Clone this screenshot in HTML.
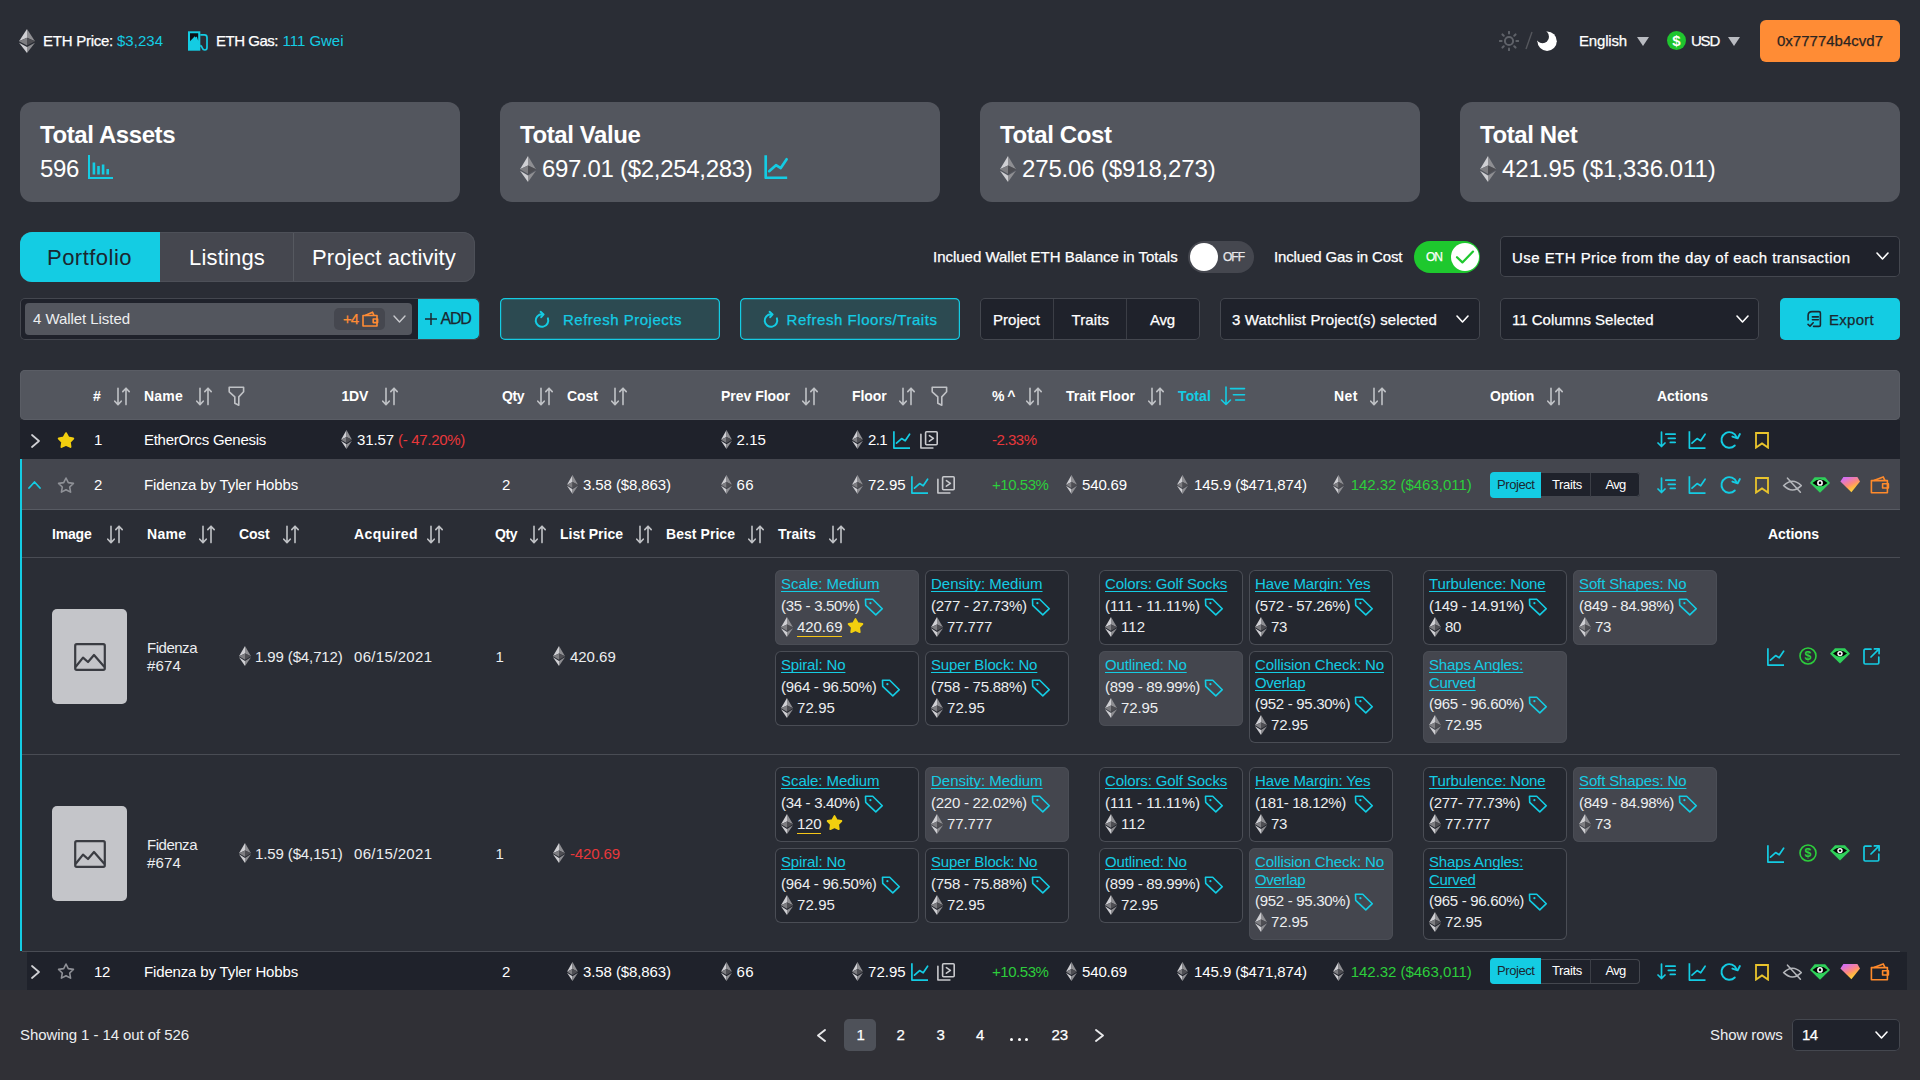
<!DOCTYPE html><html><head><meta charset="utf-8"><title>Portfolio</title><style>*{margin:0;padding:0;box-sizing:border-box}
html,body{width:1920px;height:1080px;overflow:hidden;background:#2a2d35}
body{position:relative;font-family:"Liberation Sans",sans-serif;}
.t{position:absolute;white-space:nowrap}
.r{position:absolute;display:block}
</style></head><body><svg class="r" style="left:19px;top:29px" width="16" height="24" viewBox="0 0 256 417" preserveAspectRatio="none"><polygon points="128,0 0,212 128,154" fill="#cfcfd3"/><polygon points="128,0 256,212 128,154" fill="#8e8e92"/><polygon points="0,212 128,288 128,154" fill="#7d7d81"/><polygon points="256,212 128,288 128,154" fill="#4e4e53"/><polygon points="0,237 128,417 128,312" fill="#cfcfd3"/><polygon points="256,237 128,417 128,312" fill="#8e8e92"/></svg>
<div class="t " style="left:43px;top:31.30px;font-size:15px;line-height:19px;color:#fff;letter-spacing:-0.251px;-webkit-text-stroke:0.25px #fff;">ETH Price:</div>
<div class="t " style="left:117px;top:31.30px;font-size:15px;line-height:19px;color:#14cce3;letter-spacing:0.020px;">$3,234</div>
<svg class="r" style="left:187px;top:31px;" width="22" height="21" viewBox="0 0 22 21"><rect x="1" y="0.3" width="12.3" height="19.4" fill="#14cce3"/><path d="M3 2.2H11.2V9.8L9.8 5.6L8.6 6.6L7.8 5.2L3 10.2Z" fill="#0c1016"/><path d="M13.3 3.9H17.4Q20 3.9 20 6.5V16.6Q20 19 17.8 19Q15.9 19 15.3 17Q14.7 15 13.3 14.4" stroke="#14cce3" stroke-width="1.7" fill="none"/></svg>
<div class="t " style="left:216px;top:31.30px;font-size:15px;line-height:19px;color:#fff;letter-spacing:-0.480px;-webkit-text-stroke:0.25px #fff;">ETH Gas:</div>
<div class="t " style="left:282.5px;top:31.30px;font-size:15px;line-height:19px;color:#14cce3;letter-spacing:-0.018px;">111 Gwei</div>
<svg class="r" style="left:1499px;top:31px;" width="20" height="20" viewBox="0 0 20 20"><g stroke="#5f6269" stroke-width="2" fill="none" stroke-linecap="round"><circle cx="10" cy="10" r="4.1"/><path d="M17.40 10.00L19.30 10.00"/><path d="M15.23 15.23L16.58 16.58"/><path d="M10.00 17.40L10.00 19.30"/><path d="M4.77 15.23L3.42 16.58"/><path d="M2.60 10.00L0.70 10.00"/><path d="M4.77 4.77L3.42 3.42"/><path d="M10.00 2.60L10.00 0.70"/><path d="M15.23 4.77L16.58 3.42"/></g></svg>
<svg class="r" style="left:1524px;top:31px;" width="10" height="19" viewBox="0 0 10 19"><path d="M8 1L2 18" stroke="#55575d" stroke-width="1.4"/></svg>
<svg class="r" style="left:1537px;top:31px;" width="20" height="20" viewBox="0 0 20 20"><defs><mask id="mm"><rect width="20" height="20" fill="#fff"/><circle cx="5.5" cy="5.7" r="6.5" fill="#000"/></mask></defs><circle cx="10.1" cy="10.2" r="9.7" fill="#fff" mask="url(#mm)"/></svg>
<div class="t " style="left:1579px;top:31.30px;font-size:15px;line-height:19px;color:#fff;letter-spacing:-0.171px;-webkit-text-stroke:0.25px #fff;">English</div>
<svg class="r" style="left:1637px;top:37px;" width="12" height="9" viewBox="0 0 12 9"><path d="M0 0H12L6 9Z" fill="#b9bbc1"/></svg>
<svg class="r" style="left:1667px;top:31px;" width="19" height="19" viewBox="0 0 19 19"><circle cx="9.5" cy="9.5" r="9.5" fill="#1fc52e"/><text x="9.5" y="15" font-size="15" font-weight="700" text-anchor="middle" fill="#fff" font-family="Liberation Sans">$</text></svg>
<div class="t " style="left:1691px;top:31.30px;font-size:15px;line-height:19px;color:#fff;letter-spacing:-1.223px;-webkit-text-stroke:0.25px #fff;">USD</div>
<svg class="r" style="left:1728px;top:37px;" width="12" height="9" viewBox="0 0 12 9"><path d="M0 0H12L6 9Z" fill="#b9bbc1"/></svg>
<div class="r" style="left:1760px;top:20px;width:140px;height:42px;background:#ff8c35;border-radius:6px;"></div>
<div class="t " style="left:1777px;top:31.30px;font-size:15px;line-height:19px;color:#2b2421;letter-spacing:0.006px;-webkit-text-stroke:0.25px #2b2421;">0x77774b4cvd7</div>
<div class="r" style="left:20px;top:102px;width:440px;height:100px;background:#53565e;border-radius:12px;"></div>
<div class="t " style="left:40px;top:119.68px;font-size:24px;line-height:30px;color:#fff;font-weight:700;letter-spacing:-0.408px;">Total Assets</div>
<div class="t " style="left:40px;top:153.68px;font-size:24px;line-height:30px;color:#fff;letter-spacing:-0.348px;">596</div>
<svg class="r" style="left:88px;top:155px;" width="26" height="24" viewBox="0 0 26 24"><g fill="none" stroke="#14cce3" stroke-width="2"><path d="M1 0V23H25"/></g><rect x="4.6" y="7.5" width="2.6" height="12" fill="#14cce3"/><rect x="9.2" y="11" width="2.6" height="8.5" fill="#14cce3"/><rect x="13.8" y="9.5" width="2.6" height="10" fill="#14cce3"/><rect x="18.4" y="14" width="2.6" height="5.5" fill="#14cce3"/></svg>
<div class="r" style="left:500px;top:102px;width:440px;height:100px;background:#53565e;border-radius:12px;"></div>
<div class="t " style="left:520px;top:119.68px;font-size:24px;line-height:30px;color:#fff;font-weight:700;letter-spacing:-0.397px;">Total Value</div>
<svg class="r" style="left:520px;top:156px" width="16" height="26" viewBox="0 0 256 417" preserveAspectRatio="none"><polygon points="128,0 0,212 128,154" fill="#cfcfd3"/><polygon points="128,0 256,212 128,154" fill="#8e8e92"/><polygon points="0,212 128,288 128,154" fill="#7d7d81"/><polygon points="256,212 128,288 128,154" fill="#4e4e53"/><polygon points="0,237 128,417 128,312" fill="#cfcfd3"/><polygon points="256,237 128,417 128,312" fill="#8e8e92"/></svg>
<div class="t " style="left:542px;top:153.68px;font-size:24px;line-height:30px;color:#fff;letter-spacing:-0.299px;">697.01 ($2,254,283)</div>
<svg class="r" style="left:764px;top:155px;" width="25" height="24" viewBox="0 0 18 18"><g stroke="#14cce3" stroke-width="2" fill="none" stroke-linecap="butt" stroke-linejoin="round"><path d="M0.9 0.2V17.1H17"/><path d="M3.5 12.1L8.6 7.6L12.2 9.8L16.6 3.2" stroke-linecap="round"/></g></svg>
<div class="r" style="left:980px;top:102px;width:440px;height:100px;background:#53565e;border-radius:12px;"></div>
<div class="t " style="left:1000px;top:119.68px;font-size:24px;line-height:30px;color:#fff;font-weight:700;letter-spacing:-0.404px;">Total Cost</div>
<svg class="r" style="left:1000px;top:156px" width="16" height="26" viewBox="0 0 256 417" preserveAspectRatio="none"><polygon points="128,0 0,212 128,154" fill="#cfcfd3"/><polygon points="128,0 256,212 128,154" fill="#8e8e92"/><polygon points="0,212 128,288 128,154" fill="#7d7d81"/><polygon points="256,212 128,288 128,154" fill="#4e4e53"/><polygon points="0,237 128,417 128,312" fill="#cfcfd3"/><polygon points="256,237 128,417 128,312" fill="#8e8e92"/></svg>
<div class="t " style="left:1022px;top:153.68px;font-size:24px;line-height:30px;color:#fff;letter-spacing:-0.156px;">275.06 ($918,273)</div>
<div class="r" style="left:1460px;top:102px;width:440px;height:100px;background:#53565e;border-radius:12px;"></div>
<div class="t " style="left:1480px;top:119.68px;font-size:24px;line-height:30px;color:#fff;font-weight:700;letter-spacing:-0.392px;">Total Net</div>
<svg class="r" style="left:1480px;top:156px" width="16" height="26" viewBox="0 0 256 417" preserveAspectRatio="none"><polygon points="128,0 0,212 128,154" fill="#cfcfd3"/><polygon points="128,0 256,212 128,154" fill="#8e8e92"/><polygon points="0,212 128,288 128,154" fill="#7d7d81"/><polygon points="256,212 128,288 128,154" fill="#4e4e53"/><polygon points="0,237 128,417 128,312" fill="#cfcfd3"/><polygon points="256,237 128,417 128,312" fill="#8e8e92"/></svg>
<div class="t " style="left:1502px;top:153.68px;font-size:24px;line-height:30px;color:#fff;letter-spacing:-0.034px;">421.95 ($1,336.011)</div>
<div class="r" style="left:20px;top:232px;width:455px;height:50px;background:#45474f;border-radius:12px;box-shadow:inset 0 0 0 1px #4d5058;"></div>
<div class="r" style="left:20px;top:232px;width:140px;height:50px;background:#14cce3;border-radius:0px;border-radius:12px 0 0 12px;"></div>
<div class="r" style="left:293px;top:233px;width:1px;height:48px;background:#565960;border-radius:0px;"></div>
<div class="t " style="left:47px;top:244.38px;font-size:22px;line-height:28px;color:#1b2730;letter-spacing:0.477px;">Portfolio</div>
<div class="t " style="left:189px;top:244.38px;font-size:22px;line-height:28px;color:#fff;letter-spacing:0.176px;">Listings</div>
<div class="t " style="left:312px;top:244.38px;font-size:22px;line-height:28px;color:#fff;letter-spacing:0.136px;">Project activity</div>
<div class="t " style="left:933px;top:247.30px;font-size:15px;line-height:19px;color:#fff;letter-spacing:-0.014px;-webkit-text-stroke:0.25px #fff;">Inclued Wallet ETH Balance in Totals</div>
<div class="r" style="left:1188px;top:241px;width:66px;height:32px;background:#45474f;border-radius:16px;"></div>
<div class="r" style="left:1190px;top:243px;width:28px;height:28px;background:#fff;border-radius:14px;"></div>
<div class="t " style="left:1223px;top:250.34px;font-size:12px;line-height:15px;color:#e8e8ea;letter-spacing:-0.998px;-webkit-text-stroke:0.25px #e8e8ea;">OFF</div>
<div class="t " style="left:1274px;top:247.30px;font-size:15px;line-height:19px;color:#fff;letter-spacing:-0.131px;-webkit-text-stroke:0.25px #fff;">Inclued Gas in Cost</div>
<div class="r" style="left:1414px;top:241px;width:66px;height:32px;background:#1ec82e;border-radius:16px;"></div>
<div class="t " style="left:1426px;top:250.34px;font-size:12px;line-height:15px;color:#fff;letter-spacing:-1.000px;-webkit-text-stroke:0.25px #fff;">ON</div>
<div class="r" style="left:1451px;top:243px;width:28px;height:28px;background:#fff;border-radius:14px;"></div>
<svg class="r" style="left:1455px;top:249px;" width="20" height="16" viewBox="0 0 20 16"><path d="M2 8.2L7.4 13.4L18 2.6" stroke="#1ec82e" stroke-width="2.2" fill="none" stroke-linecap="round" stroke-linejoin="round"/></svg>
<div class="r" style="left:1500px;top:236px;width:400px;height:41px;background:#1f222b;border-radius:5px;box-shadow:inset 0 0 0 1px #44474f;"></div>
<div class="t " style="left:1512px;top:248.30px;font-size:15px;line-height:19px;color:#fff;letter-spacing:0.454px;-webkit-text-stroke:0.25px #fff;">Use ETH Price from the day of each transaction</div>
<svg class="r" style="left:1876px;top:252px;" width="13" height="8" viewBox="0 0 13 8"><path d="M1 1L6.5 7L12 1" stroke="#fff" stroke-width="1.6" fill="none" stroke-linecap="round" stroke-linejoin="round"/></svg>
<div class="r" style="left:20px;top:298px;width:460px;height:42px;background:#1f222b;border-radius:5px;box-shadow:inset 0 0 0 1px #44474f;"></div>
<div class="r" style="left:25px;top:303px;width:387px;height:32px;background:#53565e;border-radius:4px;"></div>
<div class="t " style="left:33px;top:309.30px;font-size:15px;line-height:19px;color:#eceef0;letter-spacing:-0.055px;">4 Wallet Listed</div>
<div class="r" style="left:334px;top:308px;width:51px;height:22px;background:#45474f;border-radius:5px;"></div>
<div class="t " style="left:343px;top:309.30px;font-size:15px;line-height:19px;color:#ff8c35;letter-spacing:-1.051px;-webkit-text-stroke:0.25px #ff8c35;">+4</div>
<svg class="r" style="left:362px;top:311px;" width="17" height="16" viewBox="0 0 17 16"><g stroke="#ff8c35" stroke-width="1.6" fill="none" stroke-linejoin="round"><path d="M1 4.5H15V15H1Z"/><path d="M3 4.5L10.5 1.2L12 4.5"/><path d="M11.2 8H15.6V11.6H11.2Z"/></g></svg>
<svg class="r" style="left:393px;top:315px;" width="13" height="8" viewBox="0 0 13 8"><path d="M1 1L6.5 7L12 1" stroke="#c8c9cd" stroke-width="1.4" fill="none" stroke-linecap="round" stroke-linejoin="round"/></svg>
<div class="r" style="left:418px;top:299px;width:61px;height:40px;background:#14cce3;border-radius:0px;border-radius:0 5px 5px 0;"></div>
<svg class="r" style="left:425px;top:313px;" width="12" height="12" viewBox="0 0 12 12"><path d="M6 0V12M0 6H12" stroke="#1b2730" stroke-width="1.5"/></svg>
<div class="t " style="left:440.5px;top:309.46px;font-size:16px;line-height:20px;color:#1b2730;letter-spacing:-1.260px;-webkit-text-stroke:0.25px #1b2730;">ADD</div>
<div class="r" style="left:500px;top:298px;width:220px;height:42px;background:#2c4a51;border-radius:5px;box-shadow:inset 0 0 0 1.2px #14cce3;"></div>
<svg class="r" style="left:528px;top:306px;" width="30" height="28" viewBox="0 0 30 28"><g stroke="#14cce3" stroke-width="2" fill="none" stroke-linecap="round" stroke-linejoin="round"><path d="M19.9 12.35A6.3 6.3 0 1 1 14 8.2"/><path d="M12.6 5.8L15.6 8.4L13.2 11.2"/></g></svg>
<div class="t " style="left:563px;top:310.30px;font-size:15px;line-height:19px;color:#14cce3;letter-spacing:0.508px;-webkit-text-stroke:0.25px #14cce3;">Refresh Projects</div>
<div class="r" style="left:740px;top:298px;width:220px;height:42px;background:#2c4a51;border-radius:5px;box-shadow:inset 0 0 0 1.2px #14cce3;"></div>
<svg class="r" style="left:757px;top:306px;" width="30" height="28" viewBox="0 0 30 28"><g stroke="#14cce3" stroke-width="2" fill="none" stroke-linecap="round" stroke-linejoin="round"><path d="M19.9 12.35A6.3 6.3 0 1 1 14 8.2"/><path d="M12.6 5.8L15.6 8.4L13.2 11.2"/></g></svg>
<div class="t " style="left:786.5px;top:310.30px;font-size:15px;line-height:19px;color:#14cce3;letter-spacing:0.549px;-webkit-text-stroke:0.25px #14cce3;">Refresh Floors/Traits</div>
<div class="r" style="left:980px;top:298px;width:220px;height:42px;background:#1f222b;border-radius:5px;box-shadow:inset 0 0 0 1px #44474f;"></div>
<div class="r" style="left:1053px;top:299px;width:1px;height:40px;background:#3b3e46;border-radius:0px;"></div>
<div class="r" style="left:1126px;top:299px;width:1px;height:40px;background:#3b3e46;border-radius:0px;"></div>
<div class="t " style="left:993px;top:310.30px;font-size:15px;line-height:19px;color:#fff;letter-spacing:0.045px;-webkit-text-stroke:0.25px #fff;">Project</div>
<div class="t " style="left:1071.5px;top:310.30px;font-size:15px;line-height:19px;color:#fff;letter-spacing:0.093px;-webkit-text-stroke:0.25px #fff;">Traits</div>
<div class="t " style="left:1150px;top:310.30px;font-size:15px;line-height:19px;color:#fff;letter-spacing:-0.192px;-webkit-text-stroke:0.25px #fff;">Avg</div>
<div class="r" style="left:1220px;top:298px;width:260px;height:42px;background:#1f222b;border-radius:5px;box-shadow:inset 0 0 0 1px #44474f;"></div>
<div class="t " style="left:1232px;top:310.30px;font-size:15px;line-height:19px;color:#fff;letter-spacing:0.123px;-webkit-text-stroke:0.25px #fff;">3 Watchlist Project(s) selected</div>
<svg class="r" style="left:1456px;top:315px;" width="13" height="8" viewBox="0 0 13 8"><path d="M1 1L6.5 7L12 1" stroke="#fff" stroke-width="1.6" fill="none" stroke-linecap="round" stroke-linejoin="round"/></svg>
<div class="r" style="left:1500px;top:298px;width:259px;height:42px;background:#1f222b;border-radius:5px;box-shadow:inset 0 0 0 1px #44474f;"></div>
<div class="t " style="left:1512px;top:310.30px;font-size:15px;line-height:19px;color:#fff;letter-spacing:0.002px;-webkit-text-stroke:0.25px #fff;">11 Columns Selected</div>
<svg class="r" style="left:1736px;top:315px;" width="13" height="8" viewBox="0 0 13 8"><path d="M1 1L6.5 7L12 1" stroke="#fff" stroke-width="1.6" fill="none" stroke-linecap="round" stroke-linejoin="round"/></svg>
<div class="r" style="left:1780px;top:298px;width:120px;height:42px;background:#14cce3;border-radius:5px;"></div>
<svg class="r" style="left:1806px;top:310px;" width="17" height="19" viewBox="0 0 17 19"><g stroke="#1b2730" stroke-width="1.6" fill="none" stroke-linecap="round" stroke-linejoin="round"><path d="M2.1 10V5.6Q2.1 1.6 6 1.6H13Q14.4 1.6 14.4 3V15Q14.4 16.4 13 16.4H7.6"/><path d="M6.4 6.9H12.3M6.4 9.7H12.3"/><path d="M2 14.4L4 16.1L7.2 12.8"/></g></svg>
<div class="t " style="left:1829px;top:310.30px;font-size:15px;line-height:19px;color:#1b2730;letter-spacing:0.275px;-webkit-text-stroke:0.25px #1b2730;">Export</div>
<div class="r" style="left:20px;top:370px;width:1880px;height:50px;background:#53565e;border-radius:5px;box-shadow:inset 0 0 0 1px #5a5d65;"></div>
<div class="t " style="left:93px;top:387.15px;font-size:14px;line-height:18px;color:#fff;font-weight:700;letter-spacing:1.214px;">#</div>
<svg class="r" style="left:114px;top:386.5px;" width="16" height="19" viewBox="0 0 16 19"><g stroke="#c0c2c6" stroke-width="1.6" fill="none" stroke-linecap="round" stroke-linejoin="round"><path d="M4 1.2V17.6M0.8 14.2L4 17.6L7.2 14.2"/><path d="M12 17.6V1.2M8.8 4.6L12 1.2L15.2 4.6"/></g></svg>
<div class="t " style="left:144px;top:387.15px;font-size:14px;line-height:18px;color:#fff;font-weight:700;letter-spacing:0.217px;">Name</div>
<svg class="r" style="left:196px;top:386.5px;" width="16" height="19" viewBox="0 0 16 19"><g stroke="#c0c2c6" stroke-width="1.6" fill="none" stroke-linecap="round" stroke-linejoin="round"><path d="M4 1.2V17.6M0.8 14.2L4 17.6L7.2 14.2"/><path d="M12 17.6V1.2M8.8 4.6L12 1.2L15.2 4.6"/></g></svg>
<svg class="r" style="left:228px;top:386px;" width="17" height="21" viewBox="0 0 17 21"><path d="M1.2 1.2H15.6V5.8L10.8 10.9V19.2L6.8 17.2V10.9L1.2 5.8Z" stroke="#c0c2c6" stroke-width="1.6" fill="none" stroke-linejoin="round"/></svg>
<div class="t " style="left:341.5px;top:387.15px;font-size:14px;line-height:18px;color:#fff;font-weight:700;letter-spacing:-0.245px;">1DV</div>
<svg class="r" style="left:382px;top:386.5px;" width="16" height="19" viewBox="0 0 16 19"><g stroke="#c0c2c6" stroke-width="1.6" fill="none" stroke-linecap="round" stroke-linejoin="round"><path d="M4 1.2V17.6M0.8 14.2L4 17.6L7.2 14.2"/><path d="M12 17.6V1.2M8.8 4.6L12 1.2L15.2 4.6"/></g></svg>
<div class="t " style="left:502px;top:387.15px;font-size:14px;line-height:18px;color:#fff;font-weight:700;letter-spacing:-0.446px;">Qty</div>
<svg class="r" style="left:537px;top:386.5px;" width="16" height="19" viewBox="0 0 16 19"><g stroke="#c0c2c6" stroke-width="1.6" fill="none" stroke-linecap="round" stroke-linejoin="round"><path d="M4 1.2V17.6M0.8 14.2L4 17.6L7.2 14.2"/><path d="M12 17.6V1.2M8.8 4.6L12 1.2L15.2 4.6"/></g></svg>
<div class="t " style="left:567px;top:387.15px;font-size:14px;line-height:18px;color:#fff;font-weight:700;letter-spacing:-0.103px;">Cost</div>
<svg class="r" style="left:611px;top:386.5px;" width="16" height="19" viewBox="0 0 16 19"><g stroke="#c0c2c6" stroke-width="1.6" fill="none" stroke-linecap="round" stroke-linejoin="round"><path d="M4 1.2V17.6M0.8 14.2L4 17.6L7.2 14.2"/><path d="M12 17.6V1.2M8.8 4.6L12 1.2L15.2 4.6"/></g></svg>
<div class="t " style="left:721px;top:387.15px;font-size:14px;line-height:18px;color:#fff;font-weight:700;letter-spacing:-0.024px;">Prev Floor</div>
<svg class="r" style="left:802px;top:386.5px;" width="16" height="19" viewBox="0 0 16 19"><g stroke="#c0c2c6" stroke-width="1.6" fill="none" stroke-linecap="round" stroke-linejoin="round"><path d="M4 1.2V17.6M0.8 14.2L4 17.6L7.2 14.2"/><path d="M12 17.6V1.2M8.8 4.6L12 1.2L15.2 4.6"/></g></svg>
<div class="t " style="left:852px;top:387.15px;font-size:14px;line-height:18px;color:#fff;font-weight:700;letter-spacing:-0.059px;">Floor</div>
<svg class="r" style="left:899px;top:386.5px;" width="16" height="19" viewBox="0 0 16 19"><g stroke="#c0c2c6" stroke-width="1.6" fill="none" stroke-linecap="round" stroke-linejoin="round"><path d="M4 1.2V17.6M0.8 14.2L4 17.6L7.2 14.2"/><path d="M12 17.6V1.2M8.8 4.6L12 1.2L15.2 4.6"/></g></svg>
<svg class="r" style="left:931px;top:386px;" width="17" height="21" viewBox="0 0 17 21"><path d="M1.2 1.2H15.6V5.8L10.8 10.9V19.2L6.8 17.2V10.9L1.2 5.8Z" stroke="#c0c2c6" stroke-width="1.6" fill="none" stroke-linejoin="round"/></svg>
<div class="t " style="left:992px;top:387.15px;font-size:14px;line-height:18px;color:#fff;font-weight:700;letter-spacing:-0.505px;">% ^</div>
<svg class="r" style="left:1026px;top:386.5px;" width="16" height="19" viewBox="0 0 16 19"><g stroke="#c0c2c6" stroke-width="1.6" fill="none" stroke-linecap="round" stroke-linejoin="round"><path d="M4 1.2V17.6M0.8 14.2L4 17.6L7.2 14.2"/><path d="M12 17.6V1.2M8.8 4.6L12 1.2L15.2 4.6"/></g></svg>
<div class="t " style="left:1066px;top:387.15px;font-size:14px;line-height:18px;color:#fff;font-weight:700;letter-spacing:0.050px;">Trait Floor</div>
<svg class="r" style="left:1148px;top:386.5px;" width="16" height="19" viewBox="0 0 16 19"><g stroke="#c0c2c6" stroke-width="1.6" fill="none" stroke-linecap="round" stroke-linejoin="round"><path d="M4 1.2V17.6M0.8 14.2L4 17.6L7.2 14.2"/><path d="M12 17.6V1.2M8.8 4.6L12 1.2L15.2 4.6"/></g></svg>
<div class="t " style="left:1178px;top:387.15px;font-size:14px;line-height:18px;color:#14cce3;font-weight:700;letter-spacing:0.120px;">Total</div>
<svg class="r" style="left:1220px;top:386px;" width="26" height="20" viewBox="0 0 26 20"><g stroke="#14cce3" stroke-width="1.6" fill="none" stroke-linecap="round" stroke-linejoin="round"><path d="M6 1V18.5M1.5 14L6 18.5L10.5 14"/><path d="M10.5 2.6H24.5M13.4 8.7H24.5M15.7 14H24.5"/></g></svg>
<div class="t " style="left:1334px;top:387.15px;font-size:14px;line-height:18px;color:#fff;font-weight:700;letter-spacing:0.380px;">Net</div>
<svg class="r" style="left:1370px;top:386.5px;" width="16" height="19" viewBox="0 0 16 19"><g stroke="#c0c2c6" stroke-width="1.6" fill="none" stroke-linecap="round" stroke-linejoin="round"><path d="M4 1.2V17.6M0.8 14.2L4 17.6L7.2 14.2"/><path d="M12 17.6V1.2M8.8 4.6L12 1.2L15.2 4.6"/></g></svg>
<div class="t " style="left:1490px;top:387.15px;font-size:14px;line-height:18px;color:#fff;font-weight:700;letter-spacing:-0.183px;">Option</div>
<svg class="r" style="left:1547px;top:386.5px;" width="16" height="19" viewBox="0 0 16 19"><g stroke="#c0c2c6" stroke-width="1.6" fill="none" stroke-linecap="round" stroke-linejoin="round"><path d="M4 1.2V17.6M0.8 14.2L4 17.6L7.2 14.2"/><path d="M12 17.6V1.2M8.8 4.6L12 1.2L15.2 4.6"/></g></svg>
<div class="t " style="left:1657px;top:387.15px;font-size:14px;line-height:18px;color:#fff;font-weight:700;letter-spacing:-0.048px;">Actions</div>
<div class="r" style="left:20px;top:420px;width:1880px;height:39px;background:#1f222b;border-radius:0px;"></div>
<svg class="r" style="left:30.5px;top:433.5px;" width="9" height="14" viewBox="0 0 9 14"><path d="M1 1L8 7.0L1 13" stroke="#d0d1d5" stroke-width="1.7" fill="none" stroke-linecap="round" stroke-linejoin="round"/></svg>
<svg class="r" style="left:57px;top:431px;" width="18" height="18" viewBox="0 0 18 18"><path d="M9.00 2.20L11.35 6.56L16.23 7.45L12.80 11.04L13.47 15.95L9.00 13.80L4.53 15.95L5.20 11.04L1.77 7.45L6.65 6.56Z" fill="#f2cf0f" stroke="#f2cf0f" stroke-width="2" stroke-linejoin="round"/></svg>
<div class="t " style="left:94px;top:430.30px;font-size:15px;line-height:19px;color:#fff;">1</div>
<div class="t " style="left:144px;top:430.30px;font-size:15px;line-height:19px;color:#fff;letter-spacing:-0.277px;">EtherOrcs Genesis</div>
<svg class="r" style="left:341px;top:430px" width="11" height="19" viewBox="0 0 256 417" preserveAspectRatio="none"><polygon points="128,0 0,212 128,154" fill="#cfcfd3"/><polygon points="128,0 256,212 128,154" fill="#8e8e92"/><polygon points="0,212 128,288 128,154" fill="#7d7d81"/><polygon points="256,212 128,288 128,154" fill="#4e4e53"/><polygon points="0,237 128,417 128,312" fill="#cfcfd3"/><polygon points="256,237 128,417 128,312" fill="#8e8e92"/></svg>
<div class="t " style="left:357px;top:430.30px;font-size:15px;line-height:19px;color:#fff;letter-spacing:-0.107px;">31.57</div>
<div class="t " style="left:398px;top:430.30px;font-size:15px;line-height:19px;color:#e8383b;letter-spacing:-0.303px;">(- 47.20%)</div>
<svg class="r" style="left:721px;top:430px" width="11" height="19" viewBox="0 0 256 417" preserveAspectRatio="none"><polygon points="128,0 0,212 128,154" fill="#cfcfd3"/><polygon points="128,0 256,212 128,154" fill="#8e8e92"/><polygon points="0,212 128,288 128,154" fill="#7d7d81"/><polygon points="256,212 128,288 128,154" fill="#4e4e53"/><polygon points="0,237 128,417 128,312" fill="#cfcfd3"/><polygon points="256,237 128,417 128,312" fill="#8e8e92"/></svg>
<div class="t " style="left:736.5px;top:430.30px;font-size:15px;line-height:19px;color:#fff;letter-spacing:0.077px;">2.15</div>
<svg class="r" style="left:852px;top:430px" width="11" height="19" viewBox="0 0 256 417" preserveAspectRatio="none"><polygon points="128,0 0,212 128,154" fill="#cfcfd3"/><polygon points="128,0 256,212 128,154" fill="#8e8e92"/><polygon points="0,212 128,288 128,154" fill="#7d7d81"/><polygon points="256,212 128,288 128,154" fill="#4e4e53"/><polygon points="0,237 128,417 128,312" fill="#cfcfd3"/><polygon points="256,237 128,417 128,312" fill="#8e8e92"/></svg>
<div class="t " style="left:868px;top:430.30px;font-size:15px;line-height:19px;color:#fff;letter-spacing:-0.617px;">2.1</div>
<svg class="r" style="left:893px;top:431px;" width="18" height="18" viewBox="0 0 18 18"><g stroke="#14cce3" stroke-width="1.7" fill="none" stroke-linecap="butt" stroke-linejoin="round"><path d="M0.9 0.2V17.1H17"/><path d="M3.5 12.1L8.6 7.6L12.2 9.8L16.6 3.2" stroke-linecap="round"/></g></svg>
<svg class="r" style="left:920px;top:431px;" width="18" height="18" viewBox="0 0 18 18"><g stroke="#c8c9cd" stroke-width="1.6" fill="none" stroke-linecap="round" stroke-linejoin="round"><path d="M0.9 3.2V17H12.9"/><rect x="5.6" y="0.8" width="11.6" height="12.9" rx="1"/><path d="M9.4 4.6L13.4 7.4L9.4 10.2"/></g></svg>
<div class="t " style="left:992px;top:430.30px;font-size:15px;line-height:19px;color:#e8383b;letter-spacing:-0.504px;">-2.33%</div>
<svg class="r" style="left:1657px;top:431px;" width="19" height="17" viewBox="0 0 19 17"><g stroke="#14cce3" stroke-width="1.7" fill="none" stroke-linecap="round" stroke-linejoin="round"><path d="M4.5 1V15.5M1 12L4.5 15.5L8 12"/><path d="M8.8 3.2H18.2M11.3 7.3H18.2M13.3 11.4H18.2"/></g></svg>
<svg class="r" style="left:1688px;top:431px;" width="19" height="18" viewBox="0 0 18 18"><g stroke="#14cce3" stroke-width="1.7" fill="none" stroke-linecap="butt" stroke-linejoin="round"><path d="M0.9 0.2V17.1H17"/><path d="M3.5 12.1L8.6 7.6L12.2 9.8L16.6 3.2" stroke-linecap="round"/></g></svg>
<svg class="r" style="left:1716px;top:427px;" width="30" height="26" viewBox="0 0 30 26"><g stroke="#14cce3" stroke-width="1.9" fill="none" stroke-linecap="round" stroke-linejoin="round"><path d="M18.8 18.5A7.8 7.8 0 1 1 20.6 10.3"/><path d="M16.4 9.6L21.7 11.3L23.9 7"/></g></svg>
<svg class="r" style="left:1755px;top:432px;" width="14" height="17" viewBox="0 0 14 17"><path d="M1 1H13V15.6L7 11.4L1 15.6Z" stroke="#e9c42c" stroke-width="1.8" fill="none" stroke-linejoin="miter"/></svg>
<div class="r" style="left:20px;top:459px;width:1880px;height:51px;background:#44464e;border-radius:0px;box-shadow:inset 0 -1px 0 #585b63;"></div>
<svg class="r" style="left:28px;top:481px;" width="13" height="8" viewBox="0 0 13 8"><path d="M1 7L6.5 1L12 7" stroke="#14cce3" stroke-width="1.8" fill="none" stroke-linecap="round" stroke-linejoin="round"/></svg>
<svg class="r" style="left:57px;top:476px;" width="18" height="18" viewBox="0 0 18 18"><path d="M9.00 2.00L11.29 6.64L16.42 7.39L12.71 11.01L13.58 16.11L9.00 13.70L4.42 16.11L5.29 11.01L1.58 7.39L6.71 6.64Z" fill="none" stroke="#8f9197" stroke-width="1.6" stroke-linejoin="round"/></svg>
<div class="t " style="left:94px;top:475.30px;font-size:15px;line-height:19px;color:#fff;letter-spacing:-0.342px;">2</div>
<div class="t " style="left:144px;top:475.30px;font-size:15px;line-height:19px;color:#fff;letter-spacing:-0.150px;">Fidenza by Tyler Hobbs</div>
<div class="t " style="left:502px;top:475.30px;font-size:15px;line-height:19px;color:#fff;">2</div>
<svg class="r" style="left:567px;top:475.0px" width="11" height="19" viewBox="0 0 256 417" preserveAspectRatio="none"><polygon points="128,0 0,212 128,154" fill="#cfcfd3"/><polygon points="128,0 256,212 128,154" fill="#8e8e92"/><polygon points="0,212 128,288 128,154" fill="#7d7d81"/><polygon points="256,212 128,288 128,154" fill="#4e4e53"/><polygon points="0,237 128,417 128,312" fill="#cfcfd3"/><polygon points="256,237 128,417 128,312" fill="#8e8e92"/></svg>
<div class="t " style="left:583px;top:475.30px;font-size:15px;line-height:19px;color:#fff;letter-spacing:-0.095px;">3.58 ($8,863)</div>
<svg class="r" style="left:721px;top:475.0px" width="11" height="19" viewBox="0 0 256 417" preserveAspectRatio="none"><polygon points="128,0 0,212 128,154" fill="#cfcfd3"/><polygon points="128,0 256,212 128,154" fill="#8e8e92"/><polygon points="0,212 128,288 128,154" fill="#7d7d81"/><polygon points="256,212 128,288 128,154" fill="#4e4e53"/><polygon points="0,237 128,417 128,312" fill="#cfcfd3"/><polygon points="256,237 128,417 128,312" fill="#8e8e92"/></svg>
<div class="t " style="left:736.5px;top:475.30px;font-size:15px;line-height:19px;color:#fff;letter-spacing:0.408px;">66</div>
<svg class="r" style="left:852px;top:475.0px" width="11" height="19" viewBox="0 0 256 417" preserveAspectRatio="none"><polygon points="128,0 0,212 128,154" fill="#cfcfd3"/><polygon points="128,0 256,212 128,154" fill="#8e8e92"/><polygon points="0,212 128,288 128,154" fill="#7d7d81"/><polygon points="256,212 128,288 128,154" fill="#4e4e53"/><polygon points="0,237 128,417 128,312" fill="#cfcfd3"/><polygon points="256,237 128,417 128,312" fill="#8e8e92"/></svg>
<div class="t " style="left:868px;top:475.30px;font-size:15px;line-height:19px;color:#fff;letter-spacing:0.033px;">72.95</div>
<svg class="r" style="left:911px;top:476.0px;" width="18" height="18" viewBox="0 0 18 18"><g stroke="#14cce3" stroke-width="1.7" fill="none" stroke-linecap="butt" stroke-linejoin="round"><path d="M0.9 0.2V17.1H17"/><path d="M3.5 12.1L8.6 7.6L12.2 9.8L16.6 3.2" stroke-linecap="round"/></g></svg>
<svg class="r" style="left:937px;top:476.0px;" width="18" height="18" viewBox="0 0 18 18"><g stroke="#c8c9cd" stroke-width="1.6" fill="none" stroke-linecap="round" stroke-linejoin="round"><path d="M0.9 3.2V17H12.9"/><rect x="5.6" y="0.8" width="11.6" height="12.9" rx="1"/><path d="M9.4 4.6L13.4 7.4L9.4 10.2"/></g></svg>
<div class="t " style="left:992px;top:475.30px;font-size:15px;line-height:19px;color:#2dce3c;letter-spacing:-0.448px;">+10.53%</div>
<svg class="r" style="left:1066px;top:475.0px" width="11" height="19" viewBox="0 0 256 417" preserveAspectRatio="none"><polygon points="128,0 0,212 128,154" fill="#cfcfd3"/><polygon points="128,0 256,212 128,154" fill="#8e8e92"/><polygon points="0,212 128,288 128,154" fill="#7d7d81"/><polygon points="256,212 128,288 128,154" fill="#4e4e53"/><polygon points="0,237 128,417 128,312" fill="#cfcfd3"/><polygon points="256,237 128,417 128,312" fill="#8e8e92"/></svg>
<div class="t " style="left:1082px;top:475.30px;font-size:15px;line-height:19px;color:#fff;letter-spacing:-0.146px;">540.69</div>
<svg class="r" style="left:1177px;top:475.0px" width="11" height="19" viewBox="0 0 256 417" preserveAspectRatio="none"><polygon points="128,0 0,212 128,154" fill="#cfcfd3"/><polygon points="128,0 256,212 128,154" fill="#8e8e92"/><polygon points="0,212 128,288 128,154" fill="#7d7d81"/><polygon points="256,212 128,288 128,154" fill="#4e4e53"/><polygon points="0,237 128,417 128,312" fill="#cfcfd3"/><polygon points="256,237 128,417 128,312" fill="#8e8e92"/></svg>
<div class="t " style="left:1194px;top:475.30px;font-size:15px;line-height:19px;color:#fff;letter-spacing:-0.079px;">145.9 ($471,874)</div>
<svg class="r" style="left:1333px;top:475.0px" width="11" height="19" viewBox="0 0 256 417" preserveAspectRatio="none"><polygon points="128,0 0,212 128,154" fill="#cfcfd3"/><polygon points="128,0 256,212 128,154" fill="#8e8e92"/><polygon points="0,212 128,288 128,154" fill="#7d7d81"/><polygon points="256,212 128,288 128,154" fill="#4e4e53"/><polygon points="0,237 128,417 128,312" fill="#cfcfd3"/><polygon points="256,237 128,417 128,312" fill="#8e8e92"/></svg>
<div class="t " style="left:1350.7px;top:475.30px;font-size:15px;line-height:19px;color:#2dce3c;letter-spacing:-0.029px;">142.32 ($463,011)</div>
<div class="r" style="left:1490px;top:472.0px;width:150px;height:25px;background:#1f222b;border-radius:4px;box-shadow:inset 0 0 0 1px #44474f;"></div>
<div class="r" style="left:1490px;top:471.5px;width:51px;height:26px;background:#14cce3;border-radius:4px;border-radius:4px 0 0 4px;"></div>
<div class="r" style="left:1590px;top:472.5px;width:1px;height:24px;background:#3b3e46;border-radius:0px;"></div>
<div class="t " style="left:1497px;top:476.50px;font-size:13px;line-height:16px;color:#1b2730;letter-spacing:-0.423px;">Project</div>
<div class="t " style="left:1552px;top:476.50px;font-size:13px;line-height:16px;color:#fff;letter-spacing:-0.336px;">Traits</div>
<div class="t " style="left:1605.5px;top:476.50px;font-size:13px;line-height:16px;color:#fff;letter-spacing:-0.722px;">Avg</div>
<svg class="r" style="left:1657px;top:476.5px;" width="19" height="17" viewBox="0 0 19 17"><g stroke="#14cce3" stroke-width="1.7" fill="none" stroke-linecap="round" stroke-linejoin="round"><path d="M4.5 1V15.5M1 12L4.5 15.5L8 12"/><path d="M8.8 3.2H18.2M11.3 7.3H18.2M13.3 11.4H18.2"/></g></svg>
<svg class="r" style="left:1688px;top:476.0px;" width="19" height="18" viewBox="0 0 18 18"><g stroke="#14cce3" stroke-width="1.7" fill="none" stroke-linecap="butt" stroke-linejoin="round"><path d="M0.9 0.2V17.1H17"/><path d="M3.5 12.1L8.6 7.6L12.2 9.8L16.6 3.2" stroke-linecap="round"/></g></svg>
<svg class="r" style="left:1716px;top:472.0px;" width="30" height="26" viewBox="0 0 30 26"><g stroke="#14cce3" stroke-width="1.9" fill="none" stroke-linecap="round" stroke-linejoin="round"><path d="M18.8 18.5A7.8 7.8 0 1 1 20.6 10.3"/><path d="M16.4 9.6L21.7 11.3L23.9 7"/></g></svg>
<svg class="r" style="left:1755px;top:477.0px;" width="14" height="17" viewBox="0 0 14 17"><path d="M1 1H13V15.6L7 11.4L1 15.6Z" stroke="#e9c42c" stroke-width="1.8" fill="none" stroke-linejoin="miter"/></svg>
<svg class="r" style="left:1782px;top:476.0px;" width="20" height="18" viewBox="0 0 20 18"><g stroke="#b3b5ba" stroke-width="1.6" fill="none" stroke-linecap="round"><path d="M1.8 9.6Q10.5 0.8 19.2 9.6Q10.5 18.4 1.8 9.6Z"/><path d="M5.5 2.2L18.4 16.2"/></g></svg>
<svg class="r" style="left:1809px;top:477.0px;" width="22" height="17" viewBox="0 0 22 17"><path d="M5.6 0.2H16.2L21 5.9L11 15.8L1 5.9Z" fill="#2fd05a"/><path d="M3.5 5.9Q11 -0.8 18.5 5.9Q11 12.6 3.5 5.9Z" fill="#000"/><circle cx="11" cy="5.9" r="2.9" fill="#fff"/><circle cx="11" cy="5.9" r="1.3" fill="#000"/></svg>
<svg class="r" style="left:1840px;top:477.0px;" width="20" height="16" viewBox="0 0 20 16"><defs><linearGradient id="gg2" x1="0.15" y1="0.1" x2="0.7" y2="0.95"><stop offset="0" stop-color="#d46ef2"/><stop offset="0.5" stop-color="#ff8a7a"/><stop offset="0.72" stop-color="#ffb347"/><stop offset="1" stop-color="#ffd93b"/></linearGradient></defs><path d="M3.4 0H17.4L20 4.6L11.4 15.2L0.4 4.6Z" fill="url(#gg2)"/></svg>
<svg class="r" style="left:1870px;top:476.0px;" width="20" height="19" viewBox="0 0 20 19"><g stroke="#ff8a2b" stroke-width="1.6" fill="none" stroke-linejoin="round"><path d="M1.4 4.6H17.4V16.8H1.4Z"/><path d="M3.8 4.6L13.2 0.9L15 4.6"/><path d="M12.6 7.8H18.4V12H12.6Z"/></g></svg>
<div class="r" style="left:20px;top:459px;width:2px;height:492px;background:#14cce3;border-radius:0px;"></div>
<div class="t " style="left:52px;top:525.15px;font-size:14px;line-height:18px;color:#fff;font-weight:700;letter-spacing:-0.192px;">Image</div>
<svg class="r" style="left:107px;top:524.5px;" width="16" height="19" viewBox="0 0 16 19"><g stroke="#c0c2c6" stroke-width="1.6" fill="none" stroke-linecap="round" stroke-linejoin="round"><path d="M4 1.2V17.6M0.8 14.2L4 17.6L7.2 14.2"/><path d="M12 17.6V1.2M8.8 4.6L12 1.2L15.2 4.6"/></g></svg>
<div class="t " style="left:147px;top:525.15px;font-size:14px;line-height:18px;color:#fff;font-weight:700;letter-spacing:0.342px;">Name</div>
<svg class="r" style="left:199px;top:524.5px;" width="16" height="19" viewBox="0 0 16 19"><g stroke="#c0c2c6" stroke-width="1.6" fill="none" stroke-linecap="round" stroke-linejoin="round"><path d="M4 1.2V17.6M0.8 14.2L4 17.6L7.2 14.2"/><path d="M12 17.6V1.2M8.8 4.6L12 1.2L15.2 4.6"/></g></svg>
<div class="t " style="left:239px;top:525.15px;font-size:14px;line-height:18px;color:#fff;font-weight:700;letter-spacing:-0.153px;">Cost</div>
<svg class="r" style="left:283px;top:524.5px;" width="16" height="19" viewBox="0 0 16 19"><g stroke="#c0c2c6" stroke-width="1.6" fill="none" stroke-linecap="round" stroke-linejoin="round"><path d="M4 1.2V17.6M0.8 14.2L4 17.6L7.2 14.2"/><path d="M12 17.6V1.2M8.8 4.6L12 1.2L15.2 4.6"/></g></svg>
<div class="t " style="left:354px;top:525.15px;font-size:14px;line-height:18px;color:#fff;font-weight:700;letter-spacing:0.416px;">Acquired</div>
<svg class="r" style="left:427px;top:524.5px;" width="16" height="19" viewBox="0 0 16 19"><g stroke="#c0c2c6" stroke-width="1.6" fill="none" stroke-linecap="round" stroke-linejoin="round"><path d="M4 1.2V17.6M0.8 14.2L4 17.6L7.2 14.2"/><path d="M12 17.6V1.2M8.8 4.6L12 1.2L15.2 4.6"/></g></svg>
<div class="t " style="left:495px;top:525.15px;font-size:14px;line-height:18px;color:#fff;font-weight:700;letter-spacing:-0.446px;">Qty</div>
<svg class="r" style="left:530px;top:524.5px;" width="16" height="19" viewBox="0 0 16 19"><g stroke="#c0c2c6" stroke-width="1.6" fill="none" stroke-linecap="round" stroke-linejoin="round"><path d="M4 1.2V17.6M0.8 14.2L4 17.6L7.2 14.2"/><path d="M12 17.6V1.2M8.8 4.6L12 1.2L15.2 4.6"/></g></svg>
<div class="t " style="left:560px;top:525.15px;font-size:14px;line-height:18px;color:#fff;font-weight:700;letter-spacing:-0.003px;">List Price</div>
<svg class="r" style="left:636px;top:524.5px;" width="16" height="19" viewBox="0 0 16 19"><g stroke="#c0c2c6" stroke-width="1.6" fill="none" stroke-linecap="round" stroke-linejoin="round"><path d="M4 1.2V17.6M0.8 14.2L4 17.6L7.2 14.2"/><path d="M12 17.6V1.2M8.8 4.6L12 1.2L15.2 4.6"/></g></svg>
<div class="t " style="left:666px;top:525.15px;font-size:14px;line-height:18px;color:#fff;font-weight:700;letter-spacing:0.052px;">Best Price</div>
<svg class="r" style="left:748px;top:524.5px;" width="16" height="19" viewBox="0 0 16 19"><g stroke="#c0c2c6" stroke-width="1.6" fill="none" stroke-linecap="round" stroke-linejoin="round"><path d="M4 1.2V17.6M0.8 14.2L4 17.6L7.2 14.2"/><path d="M12 17.6V1.2M8.8 4.6L12 1.2L15.2 4.6"/></g></svg>
<div class="t " style="left:778px;top:525.15px;font-size:14px;line-height:18px;color:#fff;font-weight:700;letter-spacing:0.108px;">Traits</div>
<svg class="r" style="left:829px;top:524.5px;" width="16" height="19" viewBox="0 0 16 19"><g stroke="#c0c2c6" stroke-width="1.6" fill="none" stroke-linecap="round" stroke-linejoin="round"><path d="M4 1.2V17.6M0.8 14.2L4 17.6L7.2 14.2"/><path d="M12 17.6V1.2M8.8 4.6L12 1.2L15.2 4.6"/></g></svg>
<div class="t " style="left:1768px;top:525.15px;font-size:14px;line-height:18px;color:#fff;font-weight:700;letter-spacing:-0.048px;">Actions</div>
<div class="r" style="left:22px;top:557px;width:1878px;height:1px;background:#494c54;border-radius:0px;"></div>
<div class="r" style="left:22px;top:754px;width:1878px;height:1px;background:#494c54;border-radius:0px;"></div>
<div class="r" style="left:22px;top:951px;width:1878px;height:1px;background:#494c54;border-radius:0px;"></div>
<div class="r" style="left:52px;top:609.0px;width:75px;height:95px;background:#c4c5c9;border-radius:5px;"></div>
<svg class="r" style="left:74px;top:643.0px;" width="32" height="28" viewBox="0 0 32 28"><g stroke="#3a3c42" stroke-width="2.2" fill="none" stroke-linejoin="round"><rect x="1.2" y="1.2" width="29.6" height="25.6" rx="1.5"/><path d="M1.5 24L9 14.6L14 19L20 12L30.5 24"/></g></svg>
<div class="t " style="left:147px;top:638.30px;font-size:15px;line-height:19px;color:#eceef0;letter-spacing:-0.481px;">Fidenza</div>
<div class="t " style="left:147px;top:655.80px;font-size:15px;line-height:19px;color:#eceef0;letter-spacing:0.158px;">#674</div>
<svg class="r" style="left:239px;top:645.5px" width="12" height="20" viewBox="0 0 256 417" preserveAspectRatio="none"><polygon points="128,0 0,212 128,154" fill="#cfcfd3"/><polygon points="128,0 256,212 128,154" fill="#8e8e92"/><polygon points="0,212 128,288 128,154" fill="#7d7d81"/><polygon points="256,212 128,288 128,154" fill="#4e4e53"/><polygon points="0,237 128,417 128,312" fill="#cfcfd3"/><polygon points="256,237 128,417 128,312" fill="#8e8e92"/></svg>
<div class="t " style="left:255px;top:646.80px;font-size:15px;line-height:19px;color:#eceef0;letter-spacing:-0.118px;">1.99 ($4,712)</div>
<div class="t " style="left:354px;top:646.80px;font-size:15px;line-height:19px;color:#eceef0;letter-spacing:0.323px;">06/15/2021</div>
<div class="t " style="left:495.5px;top:646.80px;font-size:15px;line-height:19px;color:#eceef0;">1</div>
<svg class="r" style="left:553px;top:645.5px" width="12" height="20" viewBox="0 0 256 417" preserveAspectRatio="none"><polygon points="128,0 0,212 128,154" fill="#cfcfd3"/><polygon points="128,0 256,212 128,154" fill="#8e8e92"/><polygon points="0,212 128,288 128,154" fill="#7d7d81"/><polygon points="256,212 128,288 128,154" fill="#4e4e53"/><polygon points="0,237 128,417 128,312" fill="#cfcfd3"/><polygon points="256,237 128,417 128,312" fill="#8e8e92"/></svg>
<div class="t " style="left:570px;top:646.80px;font-size:15px;line-height:19px;color:#eceef0;letter-spacing:-0.030px;">420.69</div>
<div class="r" style="left:775px;top:570px;width:144px;height:75px;background:#44464e;border-radius:6px;box-shadow:inset 0 0 0 1px #4a4d55;"></div>
<div class="t " style="left:781px;top:574.30px;font-size:15px;line-height:19px;color:#14cce3;letter-spacing:-0.054px;text-decoration:underline;text-underline-offset:1.5px;text-decoration-skip-ink:none;text-decoration-thickness:1px;">Scale: Medium</div>
<div class="t " style="left:781px;top:596.30px;font-size:15px;line-height:19px;color:#eceef0;letter-spacing:-0.311px;">(35 - 3.50%)</div>
<svg class="r" style="left:863.8px;top:598px;" width="20" height="18" viewBox="0 0 20 18"><path d="M1.5 1.2H8.7L18.3 10.7L11.8 16.8L1.7 7.3Z" stroke="#14cce3" stroke-width="1.6" fill="none" stroke-linejoin="round"/><circle cx="6.4" cy="5.2" r="1.1" fill="#14cce3"/></svg>
<svg class="r" style="left:781px;top:617px" width="12" height="20" viewBox="0 0 256 417" preserveAspectRatio="none"><polygon points="128,0 0,212 128,154" fill="#cfcfd3"/><polygon points="128,0 256,212 128,154" fill="#8e8e92"/><polygon points="0,212 128,288 128,154" fill="#7d7d81"/><polygon points="256,212 128,288 128,154" fill="#4e4e53"/><polygon points="0,237 128,417 128,312" fill="#cfcfd3"/><polygon points="256,237 128,417 128,312" fill="#8e8e92"/></svg>
<div class="t " style="left:797px;top:617.30px;font-size:15px;line-height:19px;color:#eceef0;letter-spacing:-0.080px;">420.69</div>
<div class="r" style="left:797px;top:635.5px;width:45.4px;height:1.5px;background:#f5c518;border-radius:0px;"></div>
<svg class="r" style="left:846.9px;top:617px;" width="17" height="17" viewBox="0 0 18 18"><path d="M9.00 2.20L11.35 6.56L16.23 7.45L12.80 11.04L13.47 15.95L9.00 13.80L4.53 15.95L5.20 11.04L1.77 7.45L6.65 6.56Z" fill="#f2cf0f" stroke="#f2cf0f" stroke-width="2" stroke-linejoin="round"/></svg>
<div class="r" style="left:925px;top:570px;width:144px;height:75px;background:#24272f;border-radius:6px;box-shadow:inset 0 0 0 1px #4a4d55;"></div>
<div class="t " style="left:931px;top:574.30px;font-size:15px;line-height:19px;color:#14cce3;letter-spacing:-0.013px;text-decoration:underline;text-underline-offset:1.5px;text-decoration-skip-ink:none;text-decoration-thickness:1px;">Density: Medium</div>
<div class="t " style="left:931px;top:596.30px;font-size:15px;line-height:19px;color:#eceef0;letter-spacing:-0.251px;">(277 - 27.73%)</div>
<svg class="r" style="left:1030.7px;top:598px;" width="20" height="18" viewBox="0 0 20 18"><path d="M1.5 1.2H8.7L18.3 10.7L11.8 16.8L1.7 7.3Z" stroke="#14cce3" stroke-width="1.6" fill="none" stroke-linejoin="round"/><circle cx="6.4" cy="5.2" r="1.1" fill="#14cce3"/></svg>
<svg class="r" style="left:931px;top:617px" width="12" height="20" viewBox="0 0 256 417" preserveAspectRatio="none"><polygon points="128,0 0,212 128,154" fill="#cfcfd3"/><polygon points="128,0 256,212 128,154" fill="#8e8e92"/><polygon points="0,212 128,288 128,154" fill="#7d7d81"/><polygon points="256,212 128,288 128,154" fill="#4e4e53"/><polygon points="0,237 128,417 128,312" fill="#cfcfd3"/><polygon points="256,237 128,417 128,312" fill="#8e8e92"/></svg>
<div class="t " style="left:947px;top:617.30px;font-size:15px;line-height:19px;color:#eceef0;letter-spacing:-0.113px;">77.777</div>
<div class="r" style="left:775px;top:651px;width:144px;height:75px;background:#24272f;border-radius:6px;box-shadow:inset 0 0 0 1px #4a4d55;"></div>
<div class="t " style="left:781px;top:655.30px;font-size:15px;line-height:19px;color:#14cce3;letter-spacing:-0.146px;text-decoration:underline;text-underline-offset:1.5px;text-decoration-skip-ink:none;text-decoration-thickness:1px;">Spiral: No</div>
<div class="t " style="left:781px;top:677.30px;font-size:15px;line-height:19px;color:#eceef0;letter-spacing:-0.266px;">(964 - 96.50%)</div>
<svg class="r" style="left:880.5px;top:679px;" width="20" height="18" viewBox="0 0 20 18"><path d="M1.5 1.2H8.7L18.3 10.7L11.8 16.8L1.7 7.3Z" stroke="#14cce3" stroke-width="1.6" fill="none" stroke-linejoin="round"/><circle cx="6.4" cy="5.2" r="1.1" fill="#14cce3"/></svg>
<svg class="r" style="left:781px;top:698px" width="12" height="20" viewBox="0 0 256 417" preserveAspectRatio="none"><polygon points="128,0 0,212 128,154" fill="#cfcfd3"/><polygon points="128,0 256,212 128,154" fill="#8e8e92"/><polygon points="0,212 128,288 128,154" fill="#7d7d81"/><polygon points="256,212 128,288 128,154" fill="#4e4e53"/><polygon points="0,237 128,417 128,312" fill="#cfcfd3"/><polygon points="256,237 128,417 128,312" fill="#8e8e92"/></svg>
<div class="t " style="left:797px;top:698.30px;font-size:15px;line-height:19px;color:#eceef0;letter-spacing:0.093px;">72.95</div>
<div class="r" style="left:925px;top:651px;width:144px;height:75px;background:#24272f;border-radius:6px;box-shadow:inset 0 0 0 1px #4a4d55;"></div>
<div class="t " style="left:931px;top:655.30px;font-size:15px;line-height:19px;color:#14cce3;letter-spacing:-0.139px;text-decoration:underline;text-underline-offset:1.5px;text-decoration-skip-ink:none;text-decoration-thickness:1px;">Super Block: No</div>
<div class="t " style="left:931px;top:677.30px;font-size:15px;line-height:19px;color:#eceef0;letter-spacing:-0.251px;">(758 - 75.88%)</div>
<svg class="r" style="left:1030.7px;top:679px;" width="20" height="18" viewBox="0 0 20 18"><path d="M1.5 1.2H8.7L18.3 10.7L11.8 16.8L1.7 7.3Z" stroke="#14cce3" stroke-width="1.6" fill="none" stroke-linejoin="round"/><circle cx="6.4" cy="5.2" r="1.1" fill="#14cce3"/></svg>
<svg class="r" style="left:931px;top:698px" width="12" height="20" viewBox="0 0 256 417" preserveAspectRatio="none"><polygon points="128,0 0,212 128,154" fill="#cfcfd3"/><polygon points="128,0 256,212 128,154" fill="#8e8e92"/><polygon points="0,212 128,288 128,154" fill="#7d7d81"/><polygon points="256,212 128,288 128,154" fill="#4e4e53"/><polygon points="0,237 128,417 128,312" fill="#cfcfd3"/><polygon points="256,237 128,417 128,312" fill="#8e8e92"/></svg>
<div class="t " style="left:947px;top:698.30px;font-size:15px;line-height:19px;color:#eceef0;letter-spacing:0.093px;">72.95</div>
<div class="r" style="left:1099px;top:570px;width:144px;height:75px;background:#24272f;border-radius:6px;box-shadow:inset 0 0 0 1px #4a4d55;"></div>
<div class="t " style="left:1105px;top:574.30px;font-size:15px;line-height:19px;color:#14cce3;letter-spacing:-0.111px;text-decoration:underline;text-underline-offset:1.5px;text-decoration-skip-ink:none;text-decoration-thickness:1px;">Colors: Golf Socks</div>
<div class="t " style="left:1105px;top:596.30px;font-size:15px;line-height:19px;color:#eceef0;letter-spacing:0.024px;">(111 - 11.11%)</div>
<svg class="r" style="left:1204.1px;top:598px;" width="20" height="18" viewBox="0 0 20 18"><path d="M1.5 1.2H8.7L18.3 10.7L11.8 16.8L1.7 7.3Z" stroke="#14cce3" stroke-width="1.6" fill="none" stroke-linejoin="round"/><circle cx="6.4" cy="5.2" r="1.1" fill="#14cce3"/></svg>
<svg class="r" style="left:1105px;top:617px" width="12" height="20" viewBox="0 0 256 417" preserveAspectRatio="none"><polygon points="128,0 0,212 128,154" fill="#cfcfd3"/><polygon points="128,0 256,212 128,154" fill="#8e8e92"/><polygon points="0,212 128,288 128,154" fill="#7d7d81"/><polygon points="256,212 128,288 128,154" fill="#4e4e53"/><polygon points="0,237 128,417 128,312" fill="#cfcfd3"/><polygon points="256,237 128,417 128,312" fill="#8e8e92"/></svg>
<div class="t " style="left:1121px;top:617.30px;font-size:15px;line-height:19px;color:#eceef0;letter-spacing:0.129px;">112</div>
<div class="r" style="left:1249px;top:570px;width:144px;height:75px;background:#24272f;border-radius:6px;box-shadow:inset 0 0 0 1px #4a4d55;"></div>
<div class="t " style="left:1255px;top:574.30px;font-size:15px;line-height:19px;color:#14cce3;letter-spacing:-0.142px;text-decoration:underline;text-underline-offset:1.5px;text-decoration-skip-ink:none;text-decoration-thickness:1px;">Have Margin: Yes</div>
<div class="t " style="left:1255px;top:596.30px;font-size:15px;line-height:19px;color:#eceef0;letter-spacing:-0.294px;">(572 - 57.26%)</div>
<svg class="r" style="left:1354.1px;top:598px;" width="20" height="18" viewBox="0 0 20 18"><path d="M1.5 1.2H8.7L18.3 10.7L11.8 16.8L1.7 7.3Z" stroke="#14cce3" stroke-width="1.6" fill="none" stroke-linejoin="round"/><circle cx="6.4" cy="5.2" r="1.1" fill="#14cce3"/></svg>
<svg class="r" style="left:1255px;top:617px" width="12" height="20" viewBox="0 0 256 417" preserveAspectRatio="none"><polygon points="128,0 0,212 128,154" fill="#cfcfd3"/><polygon points="128,0 256,212 128,154" fill="#8e8e92"/><polygon points="0,212 128,288 128,154" fill="#7d7d81"/><polygon points="256,212 128,288 128,154" fill="#4e4e53"/><polygon points="0,237 128,417 128,312" fill="#cfcfd3"/><polygon points="256,237 128,417 128,312" fill="#8e8e92"/></svg>
<div class="t " style="left:1271px;top:617.30px;font-size:15px;line-height:19px;color:#eceef0;letter-spacing:-0.442px;">73</div>
<div class="r" style="left:1099px;top:651px;width:144px;height:75px;background:#44464e;border-radius:6px;box-shadow:inset 0 0 0 1px #4a4d55;"></div>
<div class="t " style="left:1105px;top:655.30px;font-size:15px;line-height:19px;color:#14cce3;letter-spacing:-0.140px;text-decoration:underline;text-underline-offset:1.5px;text-decoration-skip-ink:none;text-decoration-thickness:1px;">Outlined: No</div>
<div class="t " style="left:1105px;top:677.30px;font-size:15px;line-height:19px;color:#eceef0;letter-spacing:-0.301px;">(899 - 89.99%)</div>
<svg class="r" style="left:1204px;top:679px;" width="20" height="18" viewBox="0 0 20 18"><path d="M1.5 1.2H8.7L18.3 10.7L11.8 16.8L1.7 7.3Z" stroke="#14cce3" stroke-width="1.6" fill="none" stroke-linejoin="round"/><circle cx="6.4" cy="5.2" r="1.1" fill="#14cce3"/></svg>
<svg class="r" style="left:1105px;top:698px" width="12" height="20" viewBox="0 0 256 417" preserveAspectRatio="none"><polygon points="128,0 0,212 128,154" fill="#cfcfd3"/><polygon points="128,0 256,212 128,154" fill="#8e8e92"/><polygon points="0,212 128,288 128,154" fill="#7d7d81"/><polygon points="256,212 128,288 128,154" fill="#4e4e53"/><polygon points="0,237 128,417 128,312" fill="#cfcfd3"/><polygon points="256,237 128,417 128,312" fill="#8e8e92"/></svg>
<div class="t " style="left:1121px;top:698.30px;font-size:15px;line-height:19px;color:#eceef0;letter-spacing:-0.107px;">72.95</div>
<div class="r" style="left:1249px;top:651px;width:144px;height:92px;background:#24272f;border-radius:6px;box-shadow:inset 0 0 0 1px #4a4d55;"></div>
<div class="t " style="left:1255px;top:655.30px;font-size:15px;line-height:19px;color:#14cce3;letter-spacing:-0.099px;text-decoration:underline;text-underline-offset:1.5px;text-decoration-skip-ink:none;text-decoration-thickness:1px;">Collision Check: No</div>
<div class="t " style="left:1255px;top:673.30px;font-size:15px;line-height:19px;color:#14cce3;letter-spacing:-0.332px;text-decoration:underline;text-underline-offset:1.5px;text-decoration-skip-ink:none;text-decoration-thickness:1px;">Overlap</div>
<div class="t " style="left:1255px;top:694.30px;font-size:15px;line-height:19px;color:#eceef0;letter-spacing:-0.294px;">(952 - 95.30%)</div>
<svg class="r" style="left:1354.1px;top:696px;" width="20" height="18" viewBox="0 0 20 18"><path d="M1.5 1.2H8.7L18.3 10.7L11.8 16.8L1.7 7.3Z" stroke="#14cce3" stroke-width="1.6" fill="none" stroke-linejoin="round"/><circle cx="6.4" cy="5.2" r="1.1" fill="#14cce3"/></svg>
<svg class="r" style="left:1255px;top:715px" width="12" height="20" viewBox="0 0 256 417" preserveAspectRatio="none"><polygon points="128,0 0,212 128,154" fill="#cfcfd3"/><polygon points="128,0 256,212 128,154" fill="#8e8e92"/><polygon points="0,212 128,288 128,154" fill="#7d7d81"/><polygon points="256,212 128,288 128,154" fill="#4e4e53"/><polygon points="0,237 128,417 128,312" fill="#cfcfd3"/><polygon points="256,237 128,417 128,312" fill="#8e8e92"/></svg>
<div class="t " style="left:1271px;top:715.30px;font-size:15px;line-height:19px;color:#eceef0;letter-spacing:-0.107px;">72.95</div>
<div class="r" style="left:1423px;top:570px;width:144px;height:75px;background:#24272f;border-radius:6px;box-shadow:inset 0 0 0 1px #4a4d55;"></div>
<div class="t " style="left:1429px;top:574.30px;font-size:15px;line-height:19px;color:#14cce3;letter-spacing:-0.136px;text-decoration:underline;text-underline-offset:1.5px;text-decoration-skip-ink:none;text-decoration-thickness:1px;">Turbulence: None</div>
<div class="t " style="left:1429px;top:596.30px;font-size:15px;line-height:19px;color:#eceef0;letter-spacing:-0.301px;">(149 - 14.91%)</div>
<svg class="r" style="left:1528px;top:598px;" width="20" height="18" viewBox="0 0 20 18"><path d="M1.5 1.2H8.7L18.3 10.7L11.8 16.8L1.7 7.3Z" stroke="#14cce3" stroke-width="1.6" fill="none" stroke-linejoin="round"/><circle cx="6.4" cy="5.2" r="1.1" fill="#14cce3"/></svg>
<svg class="r" style="left:1429px;top:617px" width="12" height="20" viewBox="0 0 256 417" preserveAspectRatio="none"><polygon points="128,0 0,212 128,154" fill="#cfcfd3"/><polygon points="128,0 256,212 128,154" fill="#8e8e92"/><polygon points="0,212 128,288 128,154" fill="#7d7d81"/><polygon points="256,212 128,288 128,154" fill="#4e4e53"/><polygon points="0,237 128,417 128,312" fill="#cfcfd3"/><polygon points="256,237 128,417 128,312" fill="#8e8e92"/></svg>
<div class="t " style="left:1445px;top:617.30px;font-size:15px;line-height:19px;color:#eceef0;letter-spacing:-0.242px;">80</div>
<div class="r" style="left:1573px;top:570px;width:144px;height:75px;background:#44464e;border-radius:6px;box-shadow:inset 0 0 0 1px #4a4d55;"></div>
<div class="t " style="left:1579px;top:574.30px;font-size:15px;line-height:19px;color:#14cce3;letter-spacing:-0.122px;text-decoration:underline;text-underline-offset:1.5px;text-decoration-skip-ink:none;text-decoration-thickness:1px;">Soft Shapes: No</div>
<div class="t " style="left:1579px;top:596.30px;font-size:15px;line-height:19px;color:#eceef0;letter-spacing:-0.301px;">(849 - 84.98%)</div>
<svg class="r" style="left:1678px;top:598px;" width="20" height="18" viewBox="0 0 20 18"><path d="M1.5 1.2H8.7L18.3 10.7L11.8 16.8L1.7 7.3Z" stroke="#14cce3" stroke-width="1.6" fill="none" stroke-linejoin="round"/><circle cx="6.4" cy="5.2" r="1.1" fill="#14cce3"/></svg>
<svg class="r" style="left:1579px;top:617px" width="12" height="20" viewBox="0 0 256 417" preserveAspectRatio="none"><polygon points="128,0 0,212 128,154" fill="#cfcfd3"/><polygon points="128,0 256,212 128,154" fill="#8e8e92"/><polygon points="0,212 128,288 128,154" fill="#7d7d81"/><polygon points="256,212 128,288 128,154" fill="#4e4e53"/><polygon points="0,237 128,417 128,312" fill="#cfcfd3"/><polygon points="256,237 128,417 128,312" fill="#8e8e92"/></svg>
<div class="t " style="left:1595px;top:617.30px;font-size:15px;line-height:19px;color:#eceef0;letter-spacing:-0.442px;">73</div>
<div class="r" style="left:1423px;top:651px;width:144px;height:92px;background:#44464e;border-radius:6px;box-shadow:inset 0 0 0 1px #4a4d55;"></div>
<div class="t " style="left:1429px;top:655.30px;font-size:15px;line-height:19px;color:#14cce3;letter-spacing:-0.131px;text-decoration:underline;text-underline-offset:1.5px;text-decoration-skip-ink:none;text-decoration-thickness:1px;">Shaps Angles:</div>
<div class="t " style="left:1429px;top:673.30px;font-size:15px;line-height:19px;color:#14cce3;letter-spacing:-0.292px;text-decoration:underline;text-underline-offset:1.5px;text-decoration-skip-ink:none;text-decoration-thickness:1px;">Curved</div>
<div class="t " style="left:1429px;top:694.30px;font-size:15px;line-height:19px;color:#eceef0;letter-spacing:-0.301px;">(965 - 96.60%)</div>
<svg class="r" style="left:1528px;top:696px;" width="20" height="18" viewBox="0 0 20 18"><path d="M1.5 1.2H8.7L18.3 10.7L11.8 16.8L1.7 7.3Z" stroke="#14cce3" stroke-width="1.6" fill="none" stroke-linejoin="round"/><circle cx="6.4" cy="5.2" r="1.1" fill="#14cce3"/></svg>
<svg class="r" style="left:1429px;top:715px" width="12" height="20" viewBox="0 0 256 417" preserveAspectRatio="none"><polygon points="128,0 0,212 128,154" fill="#cfcfd3"/><polygon points="128,0 256,212 128,154" fill="#8e8e92"/><polygon points="0,212 128,288 128,154" fill="#7d7d81"/><polygon points="256,212 128,288 128,154" fill="#4e4e53"/><polygon points="0,237 128,417 128,312" fill="#cfcfd3"/><polygon points="256,237 128,417 128,312" fill="#8e8e92"/></svg>
<div class="t " style="left:1445px;top:715.30px;font-size:15px;line-height:19px;color:#eceef0;letter-spacing:-0.107px;">72.95</div>
<svg class="r" style="left:1767px;top:648.0px;" width="18" height="18" viewBox="0 0 18 18"><g stroke="#14cce3" stroke-width="1.7" fill="none" stroke-linecap="butt" stroke-linejoin="round"><path d="M0.9 0.2V17.1H17"/><path d="M3.5 12.1L8.6 7.6L12.2 9.8L16.6 3.2" stroke-linecap="round"/></g></svg>
<svg class="r" style="left:1799px;top:647.0px;" width="18" height="18" viewBox="0 0 18 18"><circle cx="9" cy="9" r="8" stroke="#2dce3c" stroke-width="1.6" fill="none"/><text x="9" y="13.4" font-size="12.5" font-weight="700" text-anchor="middle" fill="#2dce3c" font-family="Liberation Sans">$</text></svg>
<svg class="r" style="left:1830px;top:648.0px;" width="20" height="16" viewBox="0 0 20 16"><path d="M5 0.2H15L20 5.8L10 15.6L0 5.8Z" fill="#2fd05a"/><path d="M3 5.6Q10 -0.8 17 5.6Q10 12 3 5.6Z" fill="#000"/><circle cx="10" cy="5.6" r="2.7" fill="#fff"/><circle cx="10" cy="5.6" r="1.2" fill="#000"/></svg>
<svg class="r" style="left:1863px;top:648.0px;" width="18" height="17" viewBox="0 0 18 17"><g stroke="#14cce3" stroke-width="1.7" fill="none" stroke-linecap="round" stroke-linejoin="round"><path d="M8 1.2H2.2Q1 1.2 1 2.4V14.8Q1 16 2.2 16H14.6Q15.8 16 15.8 14.8V9"/><path d="M11.4 0.9H16.1V5.6"/><path d="M15.8 1.2L8 9"/></g></svg>
<div class="r" style="left:52px;top:806.0px;width:75px;height:95px;background:#c4c5c9;border-radius:5px;"></div>
<svg class="r" style="left:74px;top:840.0px;" width="32" height="28" viewBox="0 0 32 28"><g stroke="#3a3c42" stroke-width="2.2" fill="none" stroke-linejoin="round"><rect x="1.2" y="1.2" width="29.6" height="25.6" rx="1.5"/><path d="M1.5 24L9 14.6L14 19L20 12L30.5 24"/></g></svg>
<div class="t " style="left:147px;top:835.30px;font-size:15px;line-height:19px;color:#eceef0;letter-spacing:-0.481px;">Fidenza</div>
<div class="t " style="left:147px;top:852.80px;font-size:15px;line-height:19px;color:#eceef0;letter-spacing:0.158px;">#674</div>
<svg class="r" style="left:239px;top:842.5px" width="12" height="20" viewBox="0 0 256 417" preserveAspectRatio="none"><polygon points="128,0 0,212 128,154" fill="#cfcfd3"/><polygon points="128,0 256,212 128,154" fill="#8e8e92"/><polygon points="0,212 128,288 128,154" fill="#7d7d81"/><polygon points="256,212 128,288 128,154" fill="#4e4e53"/><polygon points="0,237 128,417 128,312" fill="#cfcfd3"/><polygon points="256,237 128,417 128,312" fill="#8e8e92"/></svg>
<div class="t " style="left:255px;top:843.80px;font-size:15px;line-height:19px;color:#eceef0;letter-spacing:-0.118px;">1.59 ($4,151)</div>
<div class="t " style="left:354px;top:843.80px;font-size:15px;line-height:19px;color:#eceef0;letter-spacing:0.323px;">06/15/2021</div>
<div class="t " style="left:495.5px;top:843.80px;font-size:15px;line-height:19px;color:#eceef0;">1</div>
<svg class="r" style="left:553px;top:842.5px" width="12" height="20" viewBox="0 0 256 417" preserveAspectRatio="none"><polygon points="128,0 0,212 128,154" fill="#cfcfd3"/><polygon points="128,0 256,212 128,154" fill="#8e8e92"/><polygon points="0,212 128,288 128,154" fill="#7d7d81"/><polygon points="256,212 128,288 128,154" fill="#4e4e53"/><polygon points="0,237 128,417 128,312" fill="#cfcfd3"/><polygon points="256,237 128,417 128,312" fill="#8e8e92"/></svg>
<div class="t " style="left:570px;top:843.80px;font-size:15px;line-height:19px;color:#e8383b;letter-spacing:-0.125px;">-420.69</div>
<div class="r" style="left:775px;top:767px;width:144px;height:75px;background:#24272f;border-radius:6px;box-shadow:inset 0 0 0 1px #4a4d55;"></div>
<div class="t " style="left:781px;top:771.30px;font-size:15px;line-height:19px;color:#14cce3;letter-spacing:-0.054px;text-decoration:underline;text-underline-offset:1.5px;text-decoration-skip-ink:none;text-decoration-thickness:1px;">Scale: Medium</div>
<div class="t " style="left:781px;top:793.30px;font-size:15px;line-height:19px;color:#eceef0;letter-spacing:-0.311px;">(34 - 3.40%)</div>
<svg class="r" style="left:863.8px;top:795px;" width="20" height="18" viewBox="0 0 20 18"><path d="M1.5 1.2H8.7L18.3 10.7L11.8 16.8L1.7 7.3Z" stroke="#14cce3" stroke-width="1.6" fill="none" stroke-linejoin="round"/><circle cx="6.4" cy="5.2" r="1.1" fill="#14cce3"/></svg>
<svg class="r" style="left:781px;top:814px" width="12" height="20" viewBox="0 0 256 417" preserveAspectRatio="none"><polygon points="128,0 0,212 128,154" fill="#cfcfd3"/><polygon points="128,0 256,212 128,154" fill="#8e8e92"/><polygon points="0,212 128,288 128,154" fill="#7d7d81"/><polygon points="256,212 128,288 128,154" fill="#4e4e53"/><polygon points="0,237 128,417 128,312" fill="#cfcfd3"/><polygon points="256,237 128,417 128,312" fill="#8e8e92"/></svg>
<div class="t " style="left:797px;top:814.30px;font-size:15px;line-height:19px;color:#eceef0;letter-spacing:-0.242px;">120</div>
<div class="r" style="left:797px;top:832.5px;width:24.3px;height:1.5px;background:#f5c518;border-radius:0px;"></div>
<svg class="r" style="left:825.8px;top:814px;" width="17" height="17" viewBox="0 0 18 18"><path d="M9.00 2.20L11.35 6.56L16.23 7.45L12.80 11.04L13.47 15.95L9.00 13.80L4.53 15.95L5.20 11.04L1.77 7.45L6.65 6.56Z" fill="#f2cf0f" stroke="#f2cf0f" stroke-width="2" stroke-linejoin="round"/></svg>
<div class="r" style="left:925px;top:767px;width:144px;height:75px;background:#44464e;border-radius:6px;box-shadow:inset 0 0 0 1px #4a4d55;"></div>
<div class="t " style="left:931px;top:771.30px;font-size:15px;line-height:19px;color:#14cce3;letter-spacing:-0.013px;text-decoration:underline;text-underline-offset:1.5px;text-decoration-skip-ink:none;text-decoration-thickness:1px;">Density: Medium</div>
<div class="t " style="left:931px;top:793.30px;font-size:15px;line-height:19px;color:#eceef0;letter-spacing:-0.251px;">(220 - 22.02%)</div>
<svg class="r" style="left:1030.7px;top:795px;" width="20" height="18" viewBox="0 0 20 18"><path d="M1.5 1.2H8.7L18.3 10.7L11.8 16.8L1.7 7.3Z" stroke="#14cce3" stroke-width="1.6" fill="none" stroke-linejoin="round"/><circle cx="6.4" cy="5.2" r="1.1" fill="#14cce3"/></svg>
<svg class="r" style="left:931px;top:814px" width="12" height="20" viewBox="0 0 256 417" preserveAspectRatio="none"><polygon points="128,0 0,212 128,154" fill="#cfcfd3"/><polygon points="128,0 256,212 128,154" fill="#8e8e92"/><polygon points="0,212 128,288 128,154" fill="#7d7d81"/><polygon points="256,212 128,288 128,154" fill="#4e4e53"/><polygon points="0,237 128,417 128,312" fill="#cfcfd3"/><polygon points="256,237 128,417 128,312" fill="#8e8e92"/></svg>
<div class="t " style="left:947px;top:814.30px;font-size:15px;line-height:19px;color:#eceef0;letter-spacing:-0.113px;">77.777</div>
<div class="r" style="left:775px;top:848px;width:144px;height:75px;background:#24272f;border-radius:6px;box-shadow:inset 0 0 0 1px #4a4d55;"></div>
<div class="t " style="left:781px;top:852.30px;font-size:15px;line-height:19px;color:#14cce3;letter-spacing:-0.146px;text-decoration:underline;text-underline-offset:1.5px;text-decoration-skip-ink:none;text-decoration-thickness:1px;">Spiral: No</div>
<div class="t " style="left:781px;top:874.30px;font-size:15px;line-height:19px;color:#eceef0;letter-spacing:-0.266px;">(964 - 96.50%)</div>
<svg class="r" style="left:880.5px;top:876px;" width="20" height="18" viewBox="0 0 20 18"><path d="M1.5 1.2H8.7L18.3 10.7L11.8 16.8L1.7 7.3Z" stroke="#14cce3" stroke-width="1.6" fill="none" stroke-linejoin="round"/><circle cx="6.4" cy="5.2" r="1.1" fill="#14cce3"/></svg>
<svg class="r" style="left:781px;top:895px" width="12" height="20" viewBox="0 0 256 417" preserveAspectRatio="none"><polygon points="128,0 0,212 128,154" fill="#cfcfd3"/><polygon points="128,0 256,212 128,154" fill="#8e8e92"/><polygon points="0,212 128,288 128,154" fill="#7d7d81"/><polygon points="256,212 128,288 128,154" fill="#4e4e53"/><polygon points="0,237 128,417 128,312" fill="#cfcfd3"/><polygon points="256,237 128,417 128,312" fill="#8e8e92"/></svg>
<div class="t " style="left:797px;top:895.30px;font-size:15px;line-height:19px;color:#eceef0;letter-spacing:0.093px;">72.95</div>
<div class="r" style="left:925px;top:848px;width:144px;height:75px;background:#24272f;border-radius:6px;box-shadow:inset 0 0 0 1px #4a4d55;"></div>
<div class="t " style="left:931px;top:852.30px;font-size:15px;line-height:19px;color:#14cce3;letter-spacing:-0.139px;text-decoration:underline;text-underline-offset:1.5px;text-decoration-skip-ink:none;text-decoration-thickness:1px;">Super Block: No</div>
<div class="t " style="left:931px;top:874.30px;font-size:15px;line-height:19px;color:#eceef0;letter-spacing:-0.251px;">(758 - 75.88%)</div>
<svg class="r" style="left:1030.7px;top:876px;" width="20" height="18" viewBox="0 0 20 18"><path d="M1.5 1.2H8.7L18.3 10.7L11.8 16.8L1.7 7.3Z" stroke="#14cce3" stroke-width="1.6" fill="none" stroke-linejoin="round"/><circle cx="6.4" cy="5.2" r="1.1" fill="#14cce3"/></svg>
<svg class="r" style="left:931px;top:895px" width="12" height="20" viewBox="0 0 256 417" preserveAspectRatio="none"><polygon points="128,0 0,212 128,154" fill="#cfcfd3"/><polygon points="128,0 256,212 128,154" fill="#8e8e92"/><polygon points="0,212 128,288 128,154" fill="#7d7d81"/><polygon points="256,212 128,288 128,154" fill="#4e4e53"/><polygon points="0,237 128,417 128,312" fill="#cfcfd3"/><polygon points="256,237 128,417 128,312" fill="#8e8e92"/></svg>
<div class="t " style="left:947px;top:895.30px;font-size:15px;line-height:19px;color:#eceef0;letter-spacing:0.093px;">72.95</div>
<div class="r" style="left:1099px;top:767px;width:144px;height:75px;background:#24272f;border-radius:6px;box-shadow:inset 0 0 0 1px #4a4d55;"></div>
<div class="t " style="left:1105px;top:771.30px;font-size:15px;line-height:19px;color:#14cce3;letter-spacing:-0.111px;text-decoration:underline;text-underline-offset:1.5px;text-decoration-skip-ink:none;text-decoration-thickness:1px;">Colors: Golf Socks</div>
<div class="t " style="left:1105px;top:793.30px;font-size:15px;line-height:19px;color:#eceef0;letter-spacing:0.024px;">(111 - 11.11%)</div>
<svg class="r" style="left:1204.1px;top:795px;" width="20" height="18" viewBox="0 0 20 18"><path d="M1.5 1.2H8.7L18.3 10.7L11.8 16.8L1.7 7.3Z" stroke="#14cce3" stroke-width="1.6" fill="none" stroke-linejoin="round"/><circle cx="6.4" cy="5.2" r="1.1" fill="#14cce3"/></svg>
<svg class="r" style="left:1105px;top:814px" width="12" height="20" viewBox="0 0 256 417" preserveAspectRatio="none"><polygon points="128,0 0,212 128,154" fill="#cfcfd3"/><polygon points="128,0 256,212 128,154" fill="#8e8e92"/><polygon points="0,212 128,288 128,154" fill="#7d7d81"/><polygon points="256,212 128,288 128,154" fill="#4e4e53"/><polygon points="0,237 128,417 128,312" fill="#cfcfd3"/><polygon points="256,237 128,417 128,312" fill="#8e8e92"/></svg>
<div class="t " style="left:1121px;top:814.30px;font-size:15px;line-height:19px;color:#eceef0;letter-spacing:0.129px;">112</div>
<div class="r" style="left:1249px;top:767px;width:144px;height:75px;background:#24272f;border-radius:6px;box-shadow:inset 0 0 0 1px #4a4d55;"></div>
<div class="t " style="left:1255px;top:771.30px;font-size:15px;line-height:19px;color:#14cce3;letter-spacing:-0.142px;text-decoration:underline;text-underline-offset:1.5px;text-decoration-skip-ink:none;text-decoration-thickness:1px;">Have Margin: Yes</div>
<div class="t " style="left:1255px;top:793.30px;font-size:15px;line-height:19px;color:#eceef0;letter-spacing:-0.312px;">(181- 18.12%)</div>
<svg class="r" style="left:1354px;top:795px;" width="20" height="18" viewBox="0 0 20 18"><path d="M1.5 1.2H8.7L18.3 10.7L11.8 16.8L1.7 7.3Z" stroke="#14cce3" stroke-width="1.6" fill="none" stroke-linejoin="round"/><circle cx="6.4" cy="5.2" r="1.1" fill="#14cce3"/></svg>
<svg class="r" style="left:1255px;top:814px" width="12" height="20" viewBox="0 0 256 417" preserveAspectRatio="none"><polygon points="128,0 0,212 128,154" fill="#cfcfd3"/><polygon points="128,0 256,212 128,154" fill="#8e8e92"/><polygon points="0,212 128,288 128,154" fill="#7d7d81"/><polygon points="256,212 128,288 128,154" fill="#4e4e53"/><polygon points="0,237 128,417 128,312" fill="#cfcfd3"/><polygon points="256,237 128,417 128,312" fill="#8e8e92"/></svg>
<div class="t " style="left:1271px;top:814.30px;font-size:15px;line-height:19px;color:#eceef0;letter-spacing:-0.442px;">73</div>
<div class="r" style="left:1099px;top:848px;width:144px;height:75px;background:#24272f;border-radius:6px;box-shadow:inset 0 0 0 1px #4a4d55;"></div>
<div class="t " style="left:1105px;top:852.30px;font-size:15px;line-height:19px;color:#14cce3;letter-spacing:-0.140px;text-decoration:underline;text-underline-offset:1.5px;text-decoration-skip-ink:none;text-decoration-thickness:1px;">Outlined: No</div>
<div class="t " style="left:1105px;top:874.30px;font-size:15px;line-height:19px;color:#eceef0;letter-spacing:-0.301px;">(899 - 89.99%)</div>
<svg class="r" style="left:1204px;top:876px;" width="20" height="18" viewBox="0 0 20 18"><path d="M1.5 1.2H8.7L18.3 10.7L11.8 16.8L1.7 7.3Z" stroke="#14cce3" stroke-width="1.6" fill="none" stroke-linejoin="round"/><circle cx="6.4" cy="5.2" r="1.1" fill="#14cce3"/></svg>
<svg class="r" style="left:1105px;top:895px" width="12" height="20" viewBox="0 0 256 417" preserveAspectRatio="none"><polygon points="128,0 0,212 128,154" fill="#cfcfd3"/><polygon points="128,0 256,212 128,154" fill="#8e8e92"/><polygon points="0,212 128,288 128,154" fill="#7d7d81"/><polygon points="256,212 128,288 128,154" fill="#4e4e53"/><polygon points="0,237 128,417 128,312" fill="#cfcfd3"/><polygon points="256,237 128,417 128,312" fill="#8e8e92"/></svg>
<div class="t " style="left:1121px;top:895.30px;font-size:15px;line-height:19px;color:#eceef0;letter-spacing:-0.107px;">72.95</div>
<div class="r" style="left:1249px;top:848px;width:144px;height:92px;background:#44464e;border-radius:6px;box-shadow:inset 0 0 0 1px #4a4d55;"></div>
<div class="t " style="left:1255px;top:852.30px;font-size:15px;line-height:19px;color:#14cce3;letter-spacing:-0.099px;text-decoration:underline;text-underline-offset:1.5px;text-decoration-skip-ink:none;text-decoration-thickness:1px;">Collision Check: No</div>
<div class="t " style="left:1255px;top:870.30px;font-size:15px;line-height:19px;color:#14cce3;letter-spacing:-0.332px;text-decoration:underline;text-underline-offset:1.5px;text-decoration-skip-ink:none;text-decoration-thickness:1px;">Overlap</div>
<div class="t " style="left:1255px;top:891.30px;font-size:15px;line-height:19px;color:#eceef0;letter-spacing:-0.294px;">(952 - 95.30%)</div>
<svg class="r" style="left:1354.1px;top:893px;" width="20" height="18" viewBox="0 0 20 18"><path d="M1.5 1.2H8.7L18.3 10.7L11.8 16.8L1.7 7.3Z" stroke="#14cce3" stroke-width="1.6" fill="none" stroke-linejoin="round"/><circle cx="6.4" cy="5.2" r="1.1" fill="#14cce3"/></svg>
<svg class="r" style="left:1255px;top:912px" width="12" height="20" viewBox="0 0 256 417" preserveAspectRatio="none"><polygon points="128,0 0,212 128,154" fill="#cfcfd3"/><polygon points="128,0 256,212 128,154" fill="#8e8e92"/><polygon points="0,212 128,288 128,154" fill="#7d7d81"/><polygon points="256,212 128,288 128,154" fill="#4e4e53"/><polygon points="0,237 128,417 128,312" fill="#cfcfd3"/><polygon points="256,237 128,417 128,312" fill="#8e8e92"/></svg>
<div class="t " style="left:1271px;top:912.30px;font-size:15px;line-height:19px;color:#eceef0;letter-spacing:-0.107px;">72.95</div>
<div class="r" style="left:1423px;top:767px;width:144px;height:75px;background:#24272f;border-radius:6px;box-shadow:inset 0 0 0 1px #4a4d55;"></div>
<div class="t " style="left:1429px;top:771.30px;font-size:15px;line-height:19px;color:#14cce3;letter-spacing:-0.136px;text-decoration:underline;text-underline-offset:1.5px;text-decoration-skip-ink:none;text-decoration-thickness:1px;">Turbulence: None</div>
<div class="t " style="left:1429px;top:793.30px;font-size:15px;line-height:19px;color:#eceef0;letter-spacing:-0.289px;">(277- 77.73%)</div>
<svg class="r" style="left:1528.3px;top:795px;" width="20" height="18" viewBox="0 0 20 18"><path d="M1.5 1.2H8.7L18.3 10.7L11.8 16.8L1.7 7.3Z" stroke="#14cce3" stroke-width="1.6" fill="none" stroke-linejoin="round"/><circle cx="6.4" cy="5.2" r="1.1" fill="#14cce3"/></svg>
<svg class="r" style="left:1429px;top:814px" width="12" height="20" viewBox="0 0 256 417" preserveAspectRatio="none"><polygon points="128,0 0,212 128,154" fill="#cfcfd3"/><polygon points="128,0 256,212 128,154" fill="#8e8e92"/><polygon points="0,212 128,288 128,154" fill="#7d7d81"/><polygon points="256,212 128,288 128,154" fill="#4e4e53"/><polygon points="0,237 128,417 128,312" fill="#cfcfd3"/><polygon points="256,237 128,417 128,312" fill="#8e8e92"/></svg>
<div class="t " style="left:1445px;top:814.30px;font-size:15px;line-height:19px;color:#eceef0;letter-spacing:-0.113px;">77.777</div>
<div class="r" style="left:1573px;top:767px;width:144px;height:75px;background:#44464e;border-radius:6px;box-shadow:inset 0 0 0 1px #4a4d55;"></div>
<div class="t " style="left:1579px;top:771.30px;font-size:15px;line-height:19px;color:#14cce3;letter-spacing:-0.122px;text-decoration:underline;text-underline-offset:1.5px;text-decoration-skip-ink:none;text-decoration-thickness:1px;">Soft Shapes: No</div>
<div class="t " style="left:1579px;top:793.30px;font-size:15px;line-height:19px;color:#eceef0;letter-spacing:-0.301px;">(849 - 84.98%)</div>
<svg class="r" style="left:1678px;top:795px;" width="20" height="18" viewBox="0 0 20 18"><path d="M1.5 1.2H8.7L18.3 10.7L11.8 16.8L1.7 7.3Z" stroke="#14cce3" stroke-width="1.6" fill="none" stroke-linejoin="round"/><circle cx="6.4" cy="5.2" r="1.1" fill="#14cce3"/></svg>
<svg class="r" style="left:1579px;top:814px" width="12" height="20" viewBox="0 0 256 417" preserveAspectRatio="none"><polygon points="128,0 0,212 128,154" fill="#cfcfd3"/><polygon points="128,0 256,212 128,154" fill="#8e8e92"/><polygon points="0,212 128,288 128,154" fill="#7d7d81"/><polygon points="256,212 128,288 128,154" fill="#4e4e53"/><polygon points="0,237 128,417 128,312" fill="#cfcfd3"/><polygon points="256,237 128,417 128,312" fill="#8e8e92"/></svg>
<div class="t " style="left:1595px;top:814.30px;font-size:15px;line-height:19px;color:#eceef0;letter-spacing:-0.442px;">73</div>
<div class="r" style="left:1423px;top:848px;width:144px;height:92px;background:#24272f;border-radius:6px;box-shadow:inset 0 0 0 1px #4a4d55;"></div>
<div class="t " style="left:1429px;top:852.30px;font-size:15px;line-height:19px;color:#14cce3;letter-spacing:-0.131px;text-decoration:underline;text-underline-offset:1.5px;text-decoration-skip-ink:none;text-decoration-thickness:1px;">Shaps Angles:</div>
<div class="t " style="left:1429px;top:870.30px;font-size:15px;line-height:19px;color:#14cce3;letter-spacing:-0.292px;text-decoration:underline;text-underline-offset:1.5px;text-decoration-skip-ink:none;text-decoration-thickness:1px;">Curved</div>
<div class="t " style="left:1429px;top:891.30px;font-size:15px;line-height:19px;color:#eceef0;letter-spacing:-0.301px;">(965 - 96.60%)</div>
<svg class="r" style="left:1528px;top:893px;" width="20" height="18" viewBox="0 0 20 18"><path d="M1.5 1.2H8.7L18.3 10.7L11.8 16.8L1.7 7.3Z" stroke="#14cce3" stroke-width="1.6" fill="none" stroke-linejoin="round"/><circle cx="6.4" cy="5.2" r="1.1" fill="#14cce3"/></svg>
<svg class="r" style="left:1429px;top:912px" width="12" height="20" viewBox="0 0 256 417" preserveAspectRatio="none"><polygon points="128,0 0,212 128,154" fill="#cfcfd3"/><polygon points="128,0 256,212 128,154" fill="#8e8e92"/><polygon points="0,212 128,288 128,154" fill="#7d7d81"/><polygon points="256,212 128,288 128,154" fill="#4e4e53"/><polygon points="0,237 128,417 128,312" fill="#cfcfd3"/><polygon points="256,237 128,417 128,312" fill="#8e8e92"/></svg>
<div class="t " style="left:1445px;top:912.30px;font-size:15px;line-height:19px;color:#eceef0;letter-spacing:-0.107px;">72.95</div>
<svg class="r" style="left:1767px;top:845.0px;" width="18" height="18" viewBox="0 0 18 18"><g stroke="#14cce3" stroke-width="1.7" fill="none" stroke-linecap="butt" stroke-linejoin="round"><path d="M0.9 0.2V17.1H17"/><path d="M3.5 12.1L8.6 7.6L12.2 9.8L16.6 3.2" stroke-linecap="round"/></g></svg>
<svg class="r" style="left:1799px;top:844.0px;" width="18" height="18" viewBox="0 0 18 18"><circle cx="9" cy="9" r="8" stroke="#2dce3c" stroke-width="1.6" fill="none"/><text x="9" y="13.4" font-size="12.5" font-weight="700" text-anchor="middle" fill="#2dce3c" font-family="Liberation Sans">$</text></svg>
<svg class="r" style="left:1830px;top:845.0px;" width="20" height="16" viewBox="0 0 20 16"><path d="M5 0.2H15L20 5.8L10 15.6L0 5.8Z" fill="#2fd05a"/><path d="M3 5.6Q10 -0.8 17 5.6Q10 12 3 5.6Z" fill="#000"/><circle cx="10" cy="5.6" r="2.7" fill="#fff"/><circle cx="10" cy="5.6" r="1.2" fill="#000"/></svg>
<svg class="r" style="left:1863px;top:845.0px;" width="18" height="17" viewBox="0 0 18 17"><g stroke="#14cce3" stroke-width="1.7" fill="none" stroke-linecap="round" stroke-linejoin="round"><path d="M8 1.2H2.2Q1 1.2 1 2.4V14.8Q1 16 2.2 16H14.6Q15.8 16 15.8 14.8V9"/><path d="M11.4 0.9H16.1V5.6"/><path d="M15.8 1.2L8 9"/></g></svg>
<div class="r" style="left:0px;top:990px;width:1920px;height:90px;background:#303036;border-radius:0px;"></div>
<div class="r" style="left:27px;top:952px;width:1880px;height:38px;background:#1f222b;border-radius:0px;"></div>
<svg class="r" style="left:30.5px;top:964.5px;" width="9" height="14" viewBox="0 0 9 14"><path d="M1 1L8 7.0L1 13" stroke="#d0d1d5" stroke-width="1.7" fill="none" stroke-linecap="round" stroke-linejoin="round"/></svg>
<svg class="r" style="left:57px;top:962px;" width="18" height="18" viewBox="0 0 18 18"><path d="M9.00 2.00L11.29 6.64L16.42 7.39L12.71 11.01L13.58 16.11L9.00 13.70L4.42 16.11L5.29 11.01L1.58 7.39L6.71 6.64Z" fill="none" stroke="#8f9197" stroke-width="1.6" stroke-linejoin="round"/></svg>
<div class="t " style="left:94px;top:961.80px;font-size:15px;line-height:19px;color:#fff;letter-spacing:-0.342px;">12</div>
<div class="t " style="left:144px;top:961.80px;font-size:15px;line-height:19px;color:#fff;letter-spacing:-0.150px;">Fidenza by Tyler Hobbs</div>
<div class="t " style="left:502px;top:961.80px;font-size:15px;line-height:19px;color:#fff;">2</div>
<svg class="r" style="left:567px;top:961.5px" width="11" height="19" viewBox="0 0 256 417" preserveAspectRatio="none"><polygon points="128,0 0,212 128,154" fill="#cfcfd3"/><polygon points="128,0 256,212 128,154" fill="#8e8e92"/><polygon points="0,212 128,288 128,154" fill="#7d7d81"/><polygon points="256,212 128,288 128,154" fill="#4e4e53"/><polygon points="0,237 128,417 128,312" fill="#cfcfd3"/><polygon points="256,237 128,417 128,312" fill="#8e8e92"/></svg>
<div class="t " style="left:583px;top:961.80px;font-size:15px;line-height:19px;color:#fff;letter-spacing:-0.095px;">3.58 ($8,863)</div>
<svg class="r" style="left:721px;top:961.5px" width="11" height="19" viewBox="0 0 256 417" preserveAspectRatio="none"><polygon points="128,0 0,212 128,154" fill="#cfcfd3"/><polygon points="128,0 256,212 128,154" fill="#8e8e92"/><polygon points="0,212 128,288 128,154" fill="#7d7d81"/><polygon points="256,212 128,288 128,154" fill="#4e4e53"/><polygon points="0,237 128,417 128,312" fill="#cfcfd3"/><polygon points="256,237 128,417 128,312" fill="#8e8e92"/></svg>
<div class="t " style="left:736.5px;top:961.80px;font-size:15px;line-height:19px;color:#fff;letter-spacing:0.408px;">66</div>
<svg class="r" style="left:852px;top:961.5px" width="11" height="19" viewBox="0 0 256 417" preserveAspectRatio="none"><polygon points="128,0 0,212 128,154" fill="#cfcfd3"/><polygon points="128,0 256,212 128,154" fill="#8e8e92"/><polygon points="0,212 128,288 128,154" fill="#7d7d81"/><polygon points="256,212 128,288 128,154" fill="#4e4e53"/><polygon points="0,237 128,417 128,312" fill="#cfcfd3"/><polygon points="256,237 128,417 128,312" fill="#8e8e92"/></svg>
<div class="t " style="left:868px;top:961.80px;font-size:15px;line-height:19px;color:#fff;letter-spacing:0.033px;">72.95</div>
<svg class="r" style="left:911px;top:962.5px;" width="18" height="18" viewBox="0 0 18 18"><g stroke="#14cce3" stroke-width="1.7" fill="none" stroke-linecap="butt" stroke-linejoin="round"><path d="M0.9 0.2V17.1H17"/><path d="M3.5 12.1L8.6 7.6L12.2 9.8L16.6 3.2" stroke-linecap="round"/></g></svg>
<svg class="r" style="left:937px;top:962.5px;" width="18" height="18" viewBox="0 0 18 18"><g stroke="#c8c9cd" stroke-width="1.6" fill="none" stroke-linecap="round" stroke-linejoin="round"><path d="M0.9 3.2V17H12.9"/><rect x="5.6" y="0.8" width="11.6" height="12.9" rx="1"/><path d="M9.4 4.6L13.4 7.4L9.4 10.2"/></g></svg>
<div class="t " style="left:992px;top:961.80px;font-size:15px;line-height:19px;color:#2dce3c;letter-spacing:-0.448px;">+10.53%</div>
<svg class="r" style="left:1066px;top:961.5px" width="11" height="19" viewBox="0 0 256 417" preserveAspectRatio="none"><polygon points="128,0 0,212 128,154" fill="#cfcfd3"/><polygon points="128,0 256,212 128,154" fill="#8e8e92"/><polygon points="0,212 128,288 128,154" fill="#7d7d81"/><polygon points="256,212 128,288 128,154" fill="#4e4e53"/><polygon points="0,237 128,417 128,312" fill="#cfcfd3"/><polygon points="256,237 128,417 128,312" fill="#8e8e92"/></svg>
<div class="t " style="left:1082px;top:961.80px;font-size:15px;line-height:19px;color:#fff;letter-spacing:-0.146px;">540.69</div>
<svg class="r" style="left:1177px;top:961.5px" width="11" height="19" viewBox="0 0 256 417" preserveAspectRatio="none"><polygon points="128,0 0,212 128,154" fill="#cfcfd3"/><polygon points="128,0 256,212 128,154" fill="#8e8e92"/><polygon points="0,212 128,288 128,154" fill="#7d7d81"/><polygon points="256,212 128,288 128,154" fill="#4e4e53"/><polygon points="0,237 128,417 128,312" fill="#cfcfd3"/><polygon points="256,237 128,417 128,312" fill="#8e8e92"/></svg>
<div class="t " style="left:1194px;top:961.80px;font-size:15px;line-height:19px;color:#fff;letter-spacing:-0.079px;">145.9 ($471,874)</div>
<svg class="r" style="left:1333px;top:961.5px" width="11" height="19" viewBox="0 0 256 417" preserveAspectRatio="none"><polygon points="128,0 0,212 128,154" fill="#cfcfd3"/><polygon points="128,0 256,212 128,154" fill="#8e8e92"/><polygon points="0,212 128,288 128,154" fill="#7d7d81"/><polygon points="256,212 128,288 128,154" fill="#4e4e53"/><polygon points="0,237 128,417 128,312" fill="#cfcfd3"/><polygon points="256,237 128,417 128,312" fill="#8e8e92"/></svg>
<div class="t " style="left:1350.7px;top:961.80px;font-size:15px;line-height:19px;color:#2dce3c;letter-spacing:-0.029px;">142.32 ($463,011)</div>
<div class="r" style="left:1490px;top:958.5px;width:150px;height:25px;background:#1f222b;border-radius:4px;box-shadow:inset 0 0 0 1px #44474f;"></div>
<div class="r" style="left:1490px;top:958.0px;width:51px;height:26px;background:#14cce3;border-radius:4px;border-radius:4px 0 0 4px;"></div>
<div class="r" style="left:1590px;top:959.0px;width:1px;height:24px;background:#3b3e46;border-radius:0px;"></div>
<div class="t " style="left:1497px;top:963.00px;font-size:13px;line-height:16px;color:#1b2730;letter-spacing:-0.423px;">Project</div>
<div class="t " style="left:1552px;top:963.00px;font-size:13px;line-height:16px;color:#fff;letter-spacing:-0.336px;">Traits</div>
<div class="t " style="left:1605.5px;top:963.00px;font-size:13px;line-height:16px;color:#fff;letter-spacing:-0.722px;">Avg</div>
<svg class="r" style="left:1657px;top:963.0px;" width="19" height="17" viewBox="0 0 19 17"><g stroke="#14cce3" stroke-width="1.7" fill="none" stroke-linecap="round" stroke-linejoin="round"><path d="M4.5 1V15.5M1 12L4.5 15.5L8 12"/><path d="M8.8 3.2H18.2M11.3 7.3H18.2M13.3 11.4H18.2"/></g></svg>
<svg class="r" style="left:1688px;top:962.5px;" width="19" height="18" viewBox="0 0 18 18"><g stroke="#14cce3" stroke-width="1.7" fill="none" stroke-linecap="butt" stroke-linejoin="round"><path d="M0.9 0.2V17.1H17"/><path d="M3.5 12.1L8.6 7.6L12.2 9.8L16.6 3.2" stroke-linecap="round"/></g></svg>
<svg class="r" style="left:1716px;top:958.5px;" width="30" height="26" viewBox="0 0 30 26"><g stroke="#14cce3" stroke-width="1.9" fill="none" stroke-linecap="round" stroke-linejoin="round"><path d="M18.8 18.5A7.8 7.8 0 1 1 20.6 10.3"/><path d="M16.4 9.6L21.7 11.3L23.9 7"/></g></svg>
<svg class="r" style="left:1755px;top:963.5px;" width="14" height="17" viewBox="0 0 14 17"><path d="M1 1H13V15.6L7 11.4L1 15.6Z" stroke="#e9c42c" stroke-width="1.8" fill="none" stroke-linejoin="miter"/></svg>
<svg class="r" style="left:1782px;top:962.5px;" width="20" height="18" viewBox="0 0 20 18"><g stroke="#b3b5ba" stroke-width="1.6" fill="none" stroke-linecap="round"><path d="M1.8 9.6Q10.5 0.8 19.2 9.6Q10.5 18.4 1.8 9.6Z"/><path d="M5.5 2.2L18.4 16.2"/></g></svg>
<svg class="r" style="left:1809px;top:963.5px;" width="22" height="17" viewBox="0 0 22 17"><path d="M5.6 0.2H16.2L21 5.9L11 15.8L1 5.9Z" fill="#2fd05a"/><path d="M3.5 5.9Q11 -0.8 18.5 5.9Q11 12.6 3.5 5.9Z" fill="#000"/><circle cx="11" cy="5.9" r="2.9" fill="#fff"/><circle cx="11" cy="5.9" r="1.3" fill="#000"/></svg>
<svg class="r" style="left:1840px;top:963.5px;" width="20" height="16" viewBox="0 0 20 16"><defs><linearGradient id="gg12" x1="0.15" y1="0.1" x2="0.7" y2="0.95"><stop offset="0" stop-color="#d46ef2"/><stop offset="0.5" stop-color="#ff8a7a"/><stop offset="0.72" stop-color="#ffb347"/><stop offset="1" stop-color="#ffd93b"/></linearGradient></defs><path d="M3.4 0H17.4L20 4.6L11.4 15.2L0.4 4.6Z" fill="url(#gg12)"/></svg>
<svg class="r" style="left:1870px;top:962.5px;" width="20" height="19" viewBox="0 0 20 19"><g stroke="#ff8a2b" stroke-width="1.6" fill="none" stroke-linejoin="round"><path d="M1.4 4.6H17.4V16.8H1.4Z"/><path d="M3.8 4.6L13.2 0.9L15 4.6"/><path d="M12.6 7.8H18.4V12H12.6Z"/></g></svg>
<div class="t " style="left:20px;top:1025.30px;font-size:15px;line-height:19px;color:#eceef0;letter-spacing:-0.078px;">Showing 1 - 14 out of 526</div>
<svg class="r" style="left:817px;top:1028.5px;" width="9" height="13" viewBox="0 0 9 13"><path d="M8 1L1 6.5L8 12" stroke="#e8e8ea" stroke-width="1.9" fill="none" stroke-linecap="round" stroke-linejoin="round"/></svg>
<div class="r" style="left:844px;top:1019px;width:32px;height:32px;background:#4e5159;border-radius:5px;"></div>
<div class="t " style="left:856.5px;top:1024.80px;font-size:15px;line-height:19px;color:#fff;letter-spacing:-2.342px;-webkit-text-stroke:0.25px #fff;">1</div>
<div class="t " style="left:896.5px;top:1024.80px;font-size:15px;line-height:19px;color:#fff;letter-spacing:-0.342px;-webkit-text-stroke:0.25px #fff;">2</div>
<div class="t " style="left:936.5px;top:1024.80px;font-size:15px;line-height:19px;color:#fff;letter-spacing:-0.342px;-webkit-text-stroke:0.25px #fff;">3</div>
<div class="t " style="left:976px;top:1024.80px;font-size:15px;line-height:19px;color:#fff;letter-spacing:0.158px;-webkit-text-stroke:0.25px #fff;">4</div>
<div class="t " style="left:1051.5px;top:1024.80px;font-size:15px;line-height:19px;color:#fff;letter-spacing:0.008px;-webkit-text-stroke:0.25px #fff;">23</div>
<div class="r" style="left:1010.0px;top:1037.5px;width:3px;height:3px;background:#fff;border-radius:1.5px;"></div>
<div class="r" style="left:1017.5px;top:1037.5px;width:3px;height:3px;background:#fff;border-radius:1.5px;"></div>
<div class="r" style="left:1025.0px;top:1037.5px;width:3px;height:3px;background:#fff;border-radius:1.5px;"></div>
<svg class="r" style="left:1094.5px;top:1028.5px;" width="9" height="13" viewBox="0 0 9 13"><path d="M1 1L8 6.5L1 12" stroke="#e8e8ea" stroke-width="1.9" fill="none" stroke-linecap="round" stroke-linejoin="round"/></svg>
<div class="t " style="left:1710px;top:1025.30px;font-size:15px;line-height:19px;color:#eceef0;letter-spacing:-0.073px;">Show rows</div>
<div class="r" style="left:1792px;top:1019px;width:108px;height:32px;background:#1f222b;border-radius:5px;box-shadow:inset 0 0 0 1px #44474f;"></div>
<div class="t " style="left:1802px;top:1024.80px;font-size:15px;line-height:19px;color:#fff;letter-spacing:-0.542px;-webkit-text-stroke:0.25px #fff;">14</div>
<svg class="r" style="left:1875px;top:1031px;" width="13" height="8" viewBox="0 0 13 8"><path d="M1 1L6.5 7L12 1" stroke="#fff" stroke-width="1.6" fill="none" stroke-linecap="round" stroke-linejoin="round"/></svg></body></html>
